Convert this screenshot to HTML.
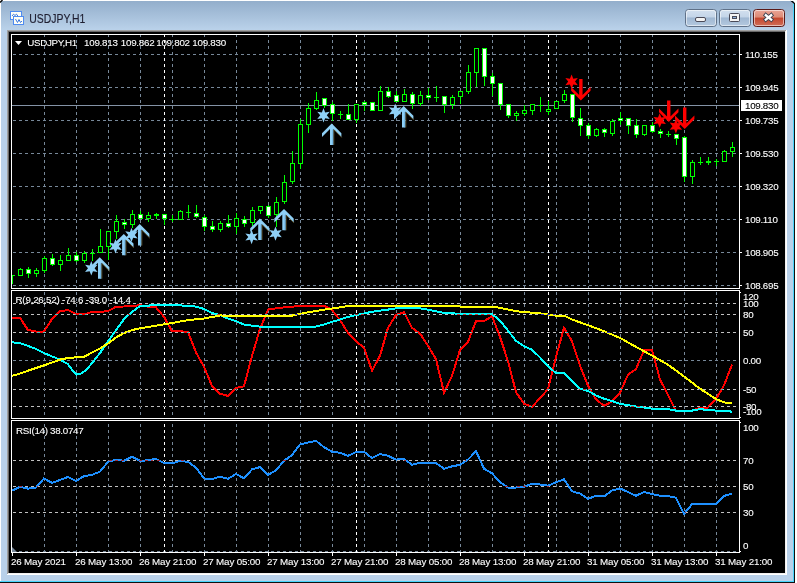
<!DOCTYPE html><html><head><meta charset="utf-8"><title>USDJPY,H1</title>
<style>html,body{margin:0;padding:0;background:#fff;overflow:hidden}svg{display:block}text{font-family:"Liberation Sans", sans-serif}</style></head><body>
<svg width="797" height="583" viewBox="0 0 797 583">
<defs>
<linearGradient id="tg" x1="0" y1="0" x2="0" y2="1"><stop offset="0" stop-color="#93aecb"/><stop offset="1" stop-color="#bad2ea"/></linearGradient>
<linearGradient id="bg1" x1="0" y1="0" x2="0" y2="1"><stop offset="0" stop-color="#d3e0ef"/><stop offset="0.46" stop-color="#c3d4e8"/><stop offset="0.48" stop-color="#9fb7d2"/><stop offset="1" stop-color="#b5cae0"/></linearGradient>
<linearGradient id="bg2" x1="0" y1="0" x2="0" y2="1"><stop offset="0" stop-color="#eba699"/><stop offset="0.45" stop-color="#dd8a75"/><stop offset="0.5" stop-color="#c4452d"/><stop offset="1" stop-color="#d0705a"/></linearGradient>
<clipPath id="cm"><rect x="12" y="35" width="727" height="253"/></clipPath>
<clipPath id="c1"><rect x="12" y="291" width="727" height="127"/></clipPath>
<clipPath id="c2"><rect x="12" y="421" width="727" height="131"/></clipPath>
</defs>
<rect x="0" y="0" width="797" height="583" fill="#fff"/>
<rect x="1" y="1" width="793" height="581" fill="#b9d1ea"/>
<rect x="1" y="1" width="792" height="29" fill="url(#tg)"/>
<rect x="793" y="3" width="1" height="579" fill="#48d4fc"/>
<rect x="794" y="3" width="1" height="580" fill="#101010"/>
<rect x="0" y="581" width="794" height="1" fill="#48d4fc"/>
<rect x="0" y="582" width="795" height="1" fill="#101010"/>
<path d="M0 2.5 L2.5 0" stroke="#000" stroke-width="1.3"/>
<path d="M791 0.5 L794.5 3.5" stroke="#000" stroke-width="1.2"/>
<rect x="791" y="0" width="4" height="1" fill="#fff"/>
<g>
<rect x="10.5" y="11.5" width="11" height="8" fill="#fffef5" stroke="#4f8cf0" stroke-width="1"/>
<path d="M12 16 L13.5 14.2 L15 15.5 L16.5 14.2 L18 16.2" stroke="#3a78e0" fill="none" stroke-width="1"/>
<rect x="13.5" y="16.5" width="10" height="8" fill="#fffef5" stroke="#4f8cf0" stroke-width="1"/>
<path d="M15.5 19 L17.5 22.5 L19 19.5 L20.5 22.5 L22 21" stroke="#3a78e0" fill="none" stroke-width="1"/>
</g>
<text x="29.3" y="22.9" font-size="12.4" fill="#1e1e30" stroke="#1e1e30" stroke-width="0.15" textLength="56" lengthAdjust="spacingAndGlyphs">USDJPY,H1</text>
<rect x="685.5" y="9.5" width="31" height="17" rx="3" ry="3" fill="url(#bg1)" stroke="#5f7188" stroke-width="1"/>
<rect x="686.5" y="10.5" width="29" height="15" rx="2" ry="2" fill="none" stroke="rgba(255,255,255,0.55)" stroke-width="1"/>
<rect x="719.5" y="9.5" width="31" height="17" rx="3" ry="3" fill="url(#bg1)" stroke="#5f7188" stroke-width="1"/>
<rect x="720.5" y="10.5" width="29" height="15" rx="2" ry="2" fill="none" stroke="rgba(255,255,255,0.55)" stroke-width="1"/>
<rect x="753.5" y="9.5" width="31" height="17" rx="3" ry="3" fill="url(#bg2)" stroke="#5a1a18" stroke-width="1"/>
<rect x="754.5" y="10.5" width="29" height="15" rx="2" ry="2" fill="none" stroke="rgba(255,255,255,0.55)" stroke-width="1"/>
<rect x="695.5" y="17.5" width="10" height="4" rx="1.5" fill="#f4f4f4" stroke="#4a4a58" stroke-width="1"/>
<rect x="729.5" y="13.5" width="10" height="8" rx="1" fill="#f4f4f4" stroke="#4a4a58" stroke-width="1"/>
<rect x="732.5" y="16.5" width="4" height="2" fill="#8fb0d8" stroke="#4a4a58" stroke-width="1"/>
<path d="M764.2 13.9 L772.8 20.9 M772.8 13.9 L764.2 20.9" stroke="#3c4050" stroke-width="4" stroke-linecap="butt"/>
<path d="M764.9 14.5 L772.1 20.3 M772.1 14.5 L764.9 20.3" stroke="#fff" stroke-width="2.3" stroke-linecap="butt"/>
<rect x="7" y="30" width="780" height="545" fill="#fff"/>
<rect x="7" y="30" width="779" height="544" fill="#a0a0a0"/>
<rect x="8" y="31" width="778" height="543" fill="#f0f0f0"/>
<rect x="8" y="31" width="777" height="542" fill="#696969"/>
<rect x="9" y="32" width="776" height="541" fill="#000"/>
<path d="M44.5 35V37M44.5 40V43M44.5 46V49M44.5 52V55M44.5 58V61M44.5 64V67M44.5 70V73M44.5 76V79M44.5 82V85M44.5 88V91M44.5 94V97M44.5 100V103M44.5 106V109M44.5 112V115M44.5 118V121M44.5 124V127M44.5 130V133M44.5 136V139M44.5 142V145M44.5 148V151M44.5 154V157M44.5 160V163M44.5 166V169M44.5 172V175M44.5 178V181M44.5 184V187M44.5 190V193M44.5 196V199M44.5 202V205M44.5 208V211M44.5 214V217M44.5 220V223M44.5 226V229M44.5 232V235M44.5 238V241M44.5 244V247M44.5 250V253M44.5 256V259M44.5 262V265M44.5 268V271M44.5 274V277M44.5 280V283M44.5 286V288M76.5 35V37M76.5 40V43M76.5 46V49M76.5 52V55M76.5 58V61M76.5 64V67M76.5 70V73M76.5 76V79M76.5 82V85M76.5 88V91M76.5 94V97M76.5 100V103M76.5 106V109M76.5 112V115M76.5 118V121M76.5 124V127M76.5 130V133M76.5 136V139M76.5 142V145M76.5 148V151M76.5 154V157M76.5 160V163M76.5 166V169M76.5 172V175M76.5 178V181M76.5 184V187M76.5 190V193M76.5 196V199M76.5 202V205M76.5 208V211M76.5 214V217M76.5 220V223M76.5 226V229M76.5 232V235M76.5 238V241M76.5 244V247M76.5 250V253M76.5 256V259M76.5 262V265M76.5 268V271M76.5 274V277M76.5 280V283M76.5 286V288M108.5 35V37M108.5 40V43M108.5 46V49M108.5 52V55M108.5 58V61M108.5 64V67M108.5 70V73M108.5 76V79M108.5 82V85M108.5 88V91M108.5 94V97M108.5 100V103M108.5 106V109M108.5 112V115M108.5 118V121M108.5 124V127M108.5 130V133M108.5 136V139M108.5 142V145M108.5 148V151M108.5 154V157M108.5 160V163M108.5 166V169M108.5 172V175M108.5 178V181M108.5 184V187M108.5 190V193M108.5 196V199M108.5 202V205M108.5 208V211M108.5 214V217M108.5 220V223M108.5 226V229M108.5 232V235M108.5 238V241M108.5 244V247M108.5 250V253M108.5 256V259M108.5 262V265M108.5 268V271M108.5 274V277M108.5 280V283M108.5 286V288M140.5 35V37M140.5 40V43M140.5 46V49M140.5 52V55M140.5 58V61M140.5 64V67M140.5 70V73M140.5 76V79M140.5 82V85M140.5 88V91M140.5 94V97M140.5 100V103M140.5 106V109M140.5 112V115M140.5 118V121M140.5 124V127M140.5 130V133M140.5 136V139M140.5 142V145M140.5 148V151M140.5 154V157M140.5 160V163M140.5 166V169M140.5 172V175M140.5 178V181M140.5 184V187M140.5 190V193M140.5 196V199M140.5 202V205M140.5 208V211M140.5 214V217M140.5 220V223M140.5 226V229M140.5 232V235M140.5 238V241M140.5 244V247M140.5 250V253M140.5 256V259M140.5 262V265M140.5 268V271M140.5 274V277M140.5 280V283M140.5 286V288M172.5 35V37M172.5 40V43M172.5 46V49M172.5 52V55M172.5 58V61M172.5 64V67M172.5 70V73M172.5 76V79M172.5 82V85M172.5 88V91M172.5 94V97M172.5 100V103M172.5 106V109M172.5 112V115M172.5 118V121M172.5 124V127M172.5 130V133M172.5 136V139M172.5 142V145M172.5 148V151M172.5 154V157M172.5 160V163M172.5 166V169M172.5 172V175M172.5 178V181M172.5 184V187M172.5 190V193M172.5 196V199M172.5 202V205M172.5 208V211M172.5 214V217M172.5 220V223M172.5 226V229M172.5 232V235M172.5 238V241M172.5 244V247M172.5 250V253M172.5 256V259M172.5 262V265M172.5 268V271M172.5 274V277M172.5 280V283M172.5 286V288M204.5 35V37M204.5 40V43M204.5 46V49M204.5 52V55M204.5 58V61M204.5 64V67M204.5 70V73M204.5 76V79M204.5 82V85M204.5 88V91M204.5 94V97M204.5 100V103M204.5 106V109M204.5 112V115M204.5 118V121M204.5 124V127M204.5 130V133M204.5 136V139M204.5 142V145M204.5 148V151M204.5 154V157M204.5 160V163M204.5 166V169M204.5 172V175M204.5 178V181M204.5 184V187M204.5 190V193M204.5 196V199M204.5 202V205M204.5 208V211M204.5 214V217M204.5 220V223M204.5 226V229M204.5 232V235M204.5 238V241M204.5 244V247M204.5 250V253M204.5 256V259M204.5 262V265M204.5 268V271M204.5 274V277M204.5 280V283M204.5 286V288M236.5 35V37M236.5 40V43M236.5 46V49M236.5 52V55M236.5 58V61M236.5 64V67M236.5 70V73M236.5 76V79M236.5 82V85M236.5 88V91M236.5 94V97M236.5 100V103M236.5 106V109M236.5 112V115M236.5 118V121M236.5 124V127M236.5 130V133M236.5 136V139M236.5 142V145M236.5 148V151M236.5 154V157M236.5 160V163M236.5 166V169M236.5 172V175M236.5 178V181M236.5 184V187M236.5 190V193M236.5 196V199M236.5 202V205M236.5 208V211M236.5 214V217M236.5 220V223M236.5 226V229M236.5 232V235M236.5 238V241M236.5 244V247M236.5 250V253M236.5 256V259M236.5 262V265M236.5 268V271M236.5 274V277M236.5 280V283M236.5 286V288M268.5 35V37M268.5 40V43M268.5 46V49M268.5 52V55M268.5 58V61M268.5 64V67M268.5 70V73M268.5 76V79M268.5 82V85M268.5 88V91M268.5 94V97M268.5 100V103M268.5 106V109M268.5 112V115M268.5 118V121M268.5 124V127M268.5 130V133M268.5 136V139M268.5 142V145M268.5 148V151M268.5 154V157M268.5 160V163M268.5 166V169M268.5 172V175M268.5 178V181M268.5 184V187M268.5 190V193M268.5 196V199M268.5 202V205M268.5 208V211M268.5 214V217M268.5 220V223M268.5 226V229M268.5 232V235M268.5 238V241M268.5 244V247M268.5 250V253M268.5 256V259M268.5 262V265M268.5 268V271M268.5 274V277M268.5 280V283M268.5 286V288M300.5 35V37M300.5 40V43M300.5 46V49M300.5 52V55M300.5 58V61M300.5 64V67M300.5 70V73M300.5 76V79M300.5 82V85M300.5 88V91M300.5 94V97M300.5 100V103M300.5 106V109M300.5 112V115M300.5 118V121M300.5 124V127M300.5 130V133M300.5 136V139M300.5 142V145M300.5 148V151M300.5 154V157M300.5 160V163M300.5 166V169M300.5 172V175M300.5 178V181M300.5 184V187M300.5 190V193M300.5 196V199M300.5 202V205M300.5 208V211M300.5 214V217M300.5 220V223M300.5 226V229M300.5 232V235M300.5 238V241M300.5 244V247M300.5 250V253M300.5 256V259M300.5 262V265M300.5 268V271M300.5 274V277M300.5 280V283M300.5 286V288M332.5 35V37M332.5 40V43M332.5 46V49M332.5 52V55M332.5 58V61M332.5 64V67M332.5 70V73M332.5 76V79M332.5 82V85M332.5 88V91M332.5 94V97M332.5 100V103M332.5 106V109M332.5 112V115M332.5 118V121M332.5 124V127M332.5 130V133M332.5 136V139M332.5 142V145M332.5 148V151M332.5 154V157M332.5 160V163M332.5 166V169M332.5 172V175M332.5 178V181M332.5 184V187M332.5 190V193M332.5 196V199M332.5 202V205M332.5 208V211M332.5 214V217M332.5 220V223M332.5 226V229M332.5 232V235M332.5 238V241M332.5 244V247M332.5 250V253M332.5 256V259M332.5 262V265M332.5 268V271M332.5 274V277M332.5 280V283M332.5 286V288M364.5 35V37M364.5 40V43M364.5 46V49M364.5 52V55M364.5 58V61M364.5 64V67M364.5 70V73M364.5 76V79M364.5 82V85M364.5 88V91M364.5 94V97M364.5 100V103M364.5 106V109M364.5 112V115M364.5 118V121M364.5 124V127M364.5 130V133M364.5 136V139M364.5 142V145M364.5 148V151M364.5 154V157M364.5 160V163M364.5 166V169M364.5 172V175M364.5 178V181M364.5 184V187M364.5 190V193M364.5 196V199M364.5 202V205M364.5 208V211M364.5 214V217M364.5 220V223M364.5 226V229M364.5 232V235M364.5 238V241M364.5 244V247M364.5 250V253M364.5 256V259M364.5 262V265M364.5 268V271M364.5 274V277M364.5 280V283M364.5 286V288M396.5 35V37M396.5 40V43M396.5 46V49M396.5 52V55M396.5 58V61M396.5 64V67M396.5 70V73M396.5 76V79M396.5 82V85M396.5 88V91M396.5 94V97M396.5 100V103M396.5 106V109M396.5 112V115M396.5 118V121M396.5 124V127M396.5 130V133M396.5 136V139M396.5 142V145M396.5 148V151M396.5 154V157M396.5 160V163M396.5 166V169M396.5 172V175M396.5 178V181M396.5 184V187M396.5 190V193M396.5 196V199M396.5 202V205M396.5 208V211M396.5 214V217M396.5 220V223M396.5 226V229M396.5 232V235M396.5 238V241M396.5 244V247M396.5 250V253M396.5 256V259M396.5 262V265M396.5 268V271M396.5 274V277M396.5 280V283M396.5 286V288M428.5 35V37M428.5 40V43M428.5 46V49M428.5 52V55M428.5 58V61M428.5 64V67M428.5 70V73M428.5 76V79M428.5 82V85M428.5 88V91M428.5 94V97M428.5 100V103M428.5 106V109M428.5 112V115M428.5 118V121M428.5 124V127M428.5 130V133M428.5 136V139M428.5 142V145M428.5 148V151M428.5 154V157M428.5 160V163M428.5 166V169M428.5 172V175M428.5 178V181M428.5 184V187M428.5 190V193M428.5 196V199M428.5 202V205M428.5 208V211M428.5 214V217M428.5 220V223M428.5 226V229M428.5 232V235M428.5 238V241M428.5 244V247M428.5 250V253M428.5 256V259M428.5 262V265M428.5 268V271M428.5 274V277M428.5 280V283M428.5 286V288M460.5 35V37M460.5 40V43M460.5 46V49M460.5 52V55M460.5 58V61M460.5 64V67M460.5 70V73M460.5 76V79M460.5 82V85M460.5 88V91M460.5 94V97M460.5 100V103M460.5 106V109M460.5 112V115M460.5 118V121M460.5 124V127M460.5 130V133M460.5 136V139M460.5 142V145M460.5 148V151M460.5 154V157M460.5 160V163M460.5 166V169M460.5 172V175M460.5 178V181M460.5 184V187M460.5 190V193M460.5 196V199M460.5 202V205M460.5 208V211M460.5 214V217M460.5 220V223M460.5 226V229M460.5 232V235M460.5 238V241M460.5 244V247M460.5 250V253M460.5 256V259M460.5 262V265M460.5 268V271M460.5 274V277M460.5 280V283M460.5 286V288M492.5 35V37M492.5 40V43M492.5 46V49M492.5 52V55M492.5 58V61M492.5 64V67M492.5 70V73M492.5 76V79M492.5 82V85M492.5 88V91M492.5 94V97M492.5 100V103M492.5 106V109M492.5 112V115M492.5 118V121M492.5 124V127M492.5 130V133M492.5 136V139M492.5 142V145M492.5 148V151M492.5 154V157M492.5 160V163M492.5 166V169M492.5 172V175M492.5 178V181M492.5 184V187M492.5 190V193M492.5 196V199M492.5 202V205M492.5 208V211M492.5 214V217M492.5 220V223M492.5 226V229M492.5 232V235M492.5 238V241M492.5 244V247M492.5 250V253M492.5 256V259M492.5 262V265M492.5 268V271M492.5 274V277M492.5 280V283M492.5 286V288M524.5 35V37M524.5 40V43M524.5 46V49M524.5 52V55M524.5 58V61M524.5 64V67M524.5 70V73M524.5 76V79M524.5 82V85M524.5 88V91M524.5 94V97M524.5 100V103M524.5 106V109M524.5 112V115M524.5 118V121M524.5 124V127M524.5 130V133M524.5 136V139M524.5 142V145M524.5 148V151M524.5 154V157M524.5 160V163M524.5 166V169M524.5 172V175M524.5 178V181M524.5 184V187M524.5 190V193M524.5 196V199M524.5 202V205M524.5 208V211M524.5 214V217M524.5 220V223M524.5 226V229M524.5 232V235M524.5 238V241M524.5 244V247M524.5 250V253M524.5 256V259M524.5 262V265M524.5 268V271M524.5 274V277M524.5 280V283M524.5 286V288M556.5 35V37M556.5 40V43M556.5 46V49M556.5 52V55M556.5 58V61M556.5 64V67M556.5 70V73M556.5 76V79M556.5 82V85M556.5 88V91M556.5 94V97M556.5 100V103M556.5 106V109M556.5 112V115M556.5 118V121M556.5 124V127M556.5 130V133M556.5 136V139M556.5 142V145M556.5 148V151M556.5 154V157M556.5 160V163M556.5 166V169M556.5 172V175M556.5 178V181M556.5 184V187M556.5 190V193M556.5 196V199M556.5 202V205M556.5 208V211M556.5 214V217M556.5 220V223M556.5 226V229M556.5 232V235M556.5 238V241M556.5 244V247M556.5 250V253M556.5 256V259M556.5 262V265M556.5 268V271M556.5 274V277M556.5 280V283M556.5 286V288M588.5 35V37M588.5 40V43M588.5 46V49M588.5 52V55M588.5 58V61M588.5 64V67M588.5 70V73M588.5 76V79M588.5 82V85M588.5 88V91M588.5 94V97M588.5 100V103M588.5 106V109M588.5 112V115M588.5 118V121M588.5 124V127M588.5 130V133M588.5 136V139M588.5 142V145M588.5 148V151M588.5 154V157M588.5 160V163M588.5 166V169M588.5 172V175M588.5 178V181M588.5 184V187M588.5 190V193M588.5 196V199M588.5 202V205M588.5 208V211M588.5 214V217M588.5 220V223M588.5 226V229M588.5 232V235M588.5 238V241M588.5 244V247M588.5 250V253M588.5 256V259M588.5 262V265M588.5 268V271M588.5 274V277M588.5 280V283M588.5 286V288M620.5 35V37M620.5 40V43M620.5 46V49M620.5 52V55M620.5 58V61M620.5 64V67M620.5 70V73M620.5 76V79M620.5 82V85M620.5 88V91M620.5 94V97M620.5 100V103M620.5 106V109M620.5 112V115M620.5 118V121M620.5 124V127M620.5 130V133M620.5 136V139M620.5 142V145M620.5 148V151M620.5 154V157M620.5 160V163M620.5 166V169M620.5 172V175M620.5 178V181M620.5 184V187M620.5 190V193M620.5 196V199M620.5 202V205M620.5 208V211M620.5 214V217M620.5 220V223M620.5 226V229M620.5 232V235M620.5 238V241M620.5 244V247M620.5 250V253M620.5 256V259M620.5 262V265M620.5 268V271M620.5 274V277M620.5 280V283M620.5 286V288M652.5 35V37M652.5 40V43M652.5 46V49M652.5 52V55M652.5 58V61M652.5 64V67M652.5 70V73M652.5 76V79M652.5 82V85M652.5 88V91M652.5 94V97M652.5 100V103M652.5 106V109M652.5 112V115M652.5 118V121M652.5 124V127M652.5 130V133M652.5 136V139M652.5 142V145M652.5 148V151M652.5 154V157M652.5 160V163M652.5 166V169M652.5 172V175M652.5 178V181M652.5 184V187M652.5 190V193M652.5 196V199M652.5 202V205M652.5 208V211M652.5 214V217M652.5 220V223M652.5 226V229M652.5 232V235M652.5 238V241M652.5 244V247M652.5 250V253M652.5 256V259M652.5 262V265M652.5 268V271M652.5 274V277M652.5 280V283M652.5 286V288M684.5 35V37M684.5 40V43M684.5 46V49M684.5 52V55M684.5 58V61M684.5 64V67M684.5 70V73M684.5 76V79M684.5 82V85M684.5 88V91M684.5 94V97M684.5 100V103M684.5 106V109M684.5 112V115M684.5 118V121M684.5 124V127M684.5 130V133M684.5 136V139M684.5 142V145M684.5 148V151M684.5 154V157M684.5 160V163M684.5 166V169M684.5 172V175M684.5 178V181M684.5 184V187M684.5 190V193M684.5 196V199M684.5 202V205M684.5 208V211M684.5 214V217M684.5 220V223M684.5 226V229M684.5 232V235M684.5 238V241M684.5 244V247M684.5 250V253M684.5 256V259M684.5 262V265M684.5 268V271M684.5 274V277M684.5 280V283M684.5 286V288M716.5 35V37M716.5 40V43M716.5 46V49M716.5 52V55M716.5 58V61M716.5 64V67M716.5 70V73M716.5 76V79M716.5 82V85M716.5 88V91M716.5 94V97M716.5 100V103M716.5 106V109M716.5 112V115M716.5 118V121M716.5 124V127M716.5 130V133M716.5 136V139M716.5 142V145M716.5 148V151M716.5 154V157M716.5 160V163M716.5 166V169M716.5 172V175M716.5 178V181M716.5 184V187M716.5 190V193M716.5 196V199M716.5 202V205M716.5 208V211M716.5 214V217M716.5 220V223M716.5 226V229M716.5 232V235M716.5 238V241M716.5 244V247M716.5 250V253M716.5 256V259M716.5 262V265M716.5 268V271M716.5 274V277M716.5 280V283M716.5 286V288M44.5 292V295M44.5 298V301M44.5 304V307M44.5 310V313M44.5 316V319M44.5 322V325M44.5 328V331M44.5 334V337M44.5 340V343M44.5 346V349M44.5 352V355M44.5 358V361M44.5 364V367M44.5 370V373M44.5 376V379M44.5 382V385M44.5 388V391M44.5 394V397M44.5 400V403M44.5 406V409M44.5 412V415M76.5 292V295M76.5 298V301M76.5 304V307M76.5 310V313M76.5 316V319M76.5 322V325M76.5 328V331M76.5 334V337M76.5 340V343M76.5 346V349M76.5 352V355M76.5 358V361M76.5 364V367M76.5 370V373M76.5 376V379M76.5 382V385M76.5 388V391M76.5 394V397M76.5 400V403M76.5 406V409M76.5 412V415M108.5 292V295M108.5 298V301M108.5 304V307M108.5 310V313M108.5 316V319M108.5 322V325M108.5 328V331M108.5 334V337M108.5 340V343M108.5 346V349M108.5 352V355M108.5 358V361M108.5 364V367M108.5 370V373M108.5 376V379M108.5 382V385M108.5 388V391M108.5 394V397M108.5 400V403M108.5 406V409M108.5 412V415M140.5 292V295M140.5 298V301M140.5 304V307M140.5 310V313M140.5 316V319M140.5 322V325M140.5 328V331M140.5 334V337M140.5 340V343M140.5 346V349M140.5 352V355M140.5 358V361M140.5 364V367M140.5 370V373M140.5 376V379M140.5 382V385M140.5 388V391M140.5 394V397M140.5 400V403M140.5 406V409M140.5 412V415M172.5 292V295M172.5 298V301M172.5 304V307M172.5 310V313M172.5 316V319M172.5 322V325M172.5 328V331M172.5 334V337M172.5 340V343M172.5 346V349M172.5 352V355M172.5 358V361M172.5 364V367M172.5 370V373M172.5 376V379M172.5 382V385M172.5 388V391M172.5 394V397M172.5 400V403M172.5 406V409M172.5 412V415M204.5 292V295M204.5 298V301M204.5 304V307M204.5 310V313M204.5 316V319M204.5 322V325M204.5 328V331M204.5 334V337M204.5 340V343M204.5 346V349M204.5 352V355M204.5 358V361M204.5 364V367M204.5 370V373M204.5 376V379M204.5 382V385M204.5 388V391M204.5 394V397M204.5 400V403M204.5 406V409M204.5 412V415M236.5 292V295M236.5 298V301M236.5 304V307M236.5 310V313M236.5 316V319M236.5 322V325M236.5 328V331M236.5 334V337M236.5 340V343M236.5 346V349M236.5 352V355M236.5 358V361M236.5 364V367M236.5 370V373M236.5 376V379M236.5 382V385M236.5 388V391M236.5 394V397M236.5 400V403M236.5 406V409M236.5 412V415M268.5 292V295M268.5 298V301M268.5 304V307M268.5 310V313M268.5 316V319M268.5 322V325M268.5 328V331M268.5 334V337M268.5 340V343M268.5 346V349M268.5 352V355M268.5 358V361M268.5 364V367M268.5 370V373M268.5 376V379M268.5 382V385M268.5 388V391M268.5 394V397M268.5 400V403M268.5 406V409M268.5 412V415M300.5 292V295M300.5 298V301M300.5 304V307M300.5 310V313M300.5 316V319M300.5 322V325M300.5 328V331M300.5 334V337M300.5 340V343M300.5 346V349M300.5 352V355M300.5 358V361M300.5 364V367M300.5 370V373M300.5 376V379M300.5 382V385M300.5 388V391M300.5 394V397M300.5 400V403M300.5 406V409M300.5 412V415M332.5 292V295M332.5 298V301M332.5 304V307M332.5 310V313M332.5 316V319M332.5 322V325M332.5 328V331M332.5 334V337M332.5 340V343M332.5 346V349M332.5 352V355M332.5 358V361M332.5 364V367M332.5 370V373M332.5 376V379M332.5 382V385M332.5 388V391M332.5 394V397M332.5 400V403M332.5 406V409M332.5 412V415M364.5 292V295M364.5 298V301M364.5 304V307M364.5 310V313M364.5 316V319M364.5 322V325M364.5 328V331M364.5 334V337M364.5 340V343M364.5 346V349M364.5 352V355M364.5 358V361M364.5 364V367M364.5 370V373M364.5 376V379M364.5 382V385M364.5 388V391M364.5 394V397M364.5 400V403M364.5 406V409M364.5 412V415M396.5 292V295M396.5 298V301M396.5 304V307M396.5 310V313M396.5 316V319M396.5 322V325M396.5 328V331M396.5 334V337M396.5 340V343M396.5 346V349M396.5 352V355M396.5 358V361M396.5 364V367M396.5 370V373M396.5 376V379M396.5 382V385M396.5 388V391M396.5 394V397M396.5 400V403M396.5 406V409M396.5 412V415M428.5 292V295M428.5 298V301M428.5 304V307M428.5 310V313M428.5 316V319M428.5 322V325M428.5 328V331M428.5 334V337M428.5 340V343M428.5 346V349M428.5 352V355M428.5 358V361M428.5 364V367M428.5 370V373M428.5 376V379M428.5 382V385M428.5 388V391M428.5 394V397M428.5 400V403M428.5 406V409M428.5 412V415M460.5 292V295M460.5 298V301M460.5 304V307M460.5 310V313M460.5 316V319M460.5 322V325M460.5 328V331M460.5 334V337M460.5 340V343M460.5 346V349M460.5 352V355M460.5 358V361M460.5 364V367M460.5 370V373M460.5 376V379M460.5 382V385M460.5 388V391M460.5 394V397M460.5 400V403M460.5 406V409M460.5 412V415M492.5 292V295M492.5 298V301M492.5 304V307M492.5 310V313M492.5 316V319M492.5 322V325M492.5 328V331M492.5 334V337M492.5 340V343M492.5 346V349M492.5 352V355M492.5 358V361M492.5 364V367M492.5 370V373M492.5 376V379M492.5 382V385M492.5 388V391M492.5 394V397M492.5 400V403M492.5 406V409M492.5 412V415M524.5 292V295M524.5 298V301M524.5 304V307M524.5 310V313M524.5 316V319M524.5 322V325M524.5 328V331M524.5 334V337M524.5 340V343M524.5 346V349M524.5 352V355M524.5 358V361M524.5 364V367M524.5 370V373M524.5 376V379M524.5 382V385M524.5 388V391M524.5 394V397M524.5 400V403M524.5 406V409M524.5 412V415M556.5 292V295M556.5 298V301M556.5 304V307M556.5 310V313M556.5 316V319M556.5 322V325M556.5 328V331M556.5 334V337M556.5 340V343M556.5 346V349M556.5 352V355M556.5 358V361M556.5 364V367M556.5 370V373M556.5 376V379M556.5 382V385M556.5 388V391M556.5 394V397M556.5 400V403M556.5 406V409M556.5 412V415M588.5 292V295M588.5 298V301M588.5 304V307M588.5 310V313M588.5 316V319M588.5 322V325M588.5 328V331M588.5 334V337M588.5 340V343M588.5 346V349M588.5 352V355M588.5 358V361M588.5 364V367M588.5 370V373M588.5 376V379M588.5 382V385M588.5 388V391M588.5 394V397M588.5 400V403M588.5 406V409M588.5 412V415M620.5 292V295M620.5 298V301M620.5 304V307M620.5 310V313M620.5 316V319M620.5 322V325M620.5 328V331M620.5 334V337M620.5 340V343M620.5 346V349M620.5 352V355M620.5 358V361M620.5 364V367M620.5 370V373M620.5 376V379M620.5 382V385M620.5 388V391M620.5 394V397M620.5 400V403M620.5 406V409M620.5 412V415M652.5 292V295M652.5 298V301M652.5 304V307M652.5 310V313M652.5 316V319M652.5 322V325M652.5 328V331M652.5 334V337M652.5 340V343M652.5 346V349M652.5 352V355M652.5 358V361M652.5 364V367M652.5 370V373M652.5 376V379M652.5 382V385M652.5 388V391M652.5 394V397M652.5 400V403M652.5 406V409M652.5 412V415M684.5 292V295M684.5 298V301M684.5 304V307M684.5 310V313M684.5 316V319M684.5 322V325M684.5 328V331M684.5 334V337M684.5 340V343M684.5 346V349M684.5 352V355M684.5 358V361M684.5 364V367M684.5 370V373M684.5 376V379M684.5 382V385M684.5 388V391M684.5 394V397M684.5 400V403M684.5 406V409M684.5 412V415M716.5 292V295M716.5 298V301M716.5 304V307M716.5 310V313M716.5 316V319M716.5 322V325M716.5 328V331M716.5 334V337M716.5 340V343M716.5 346V349M716.5 352V355M716.5 358V361M716.5 364V367M716.5 370V373M716.5 376V379M716.5 382V385M716.5 388V391M716.5 394V397M716.5 400V403M716.5 406V409M716.5 412V415M44.5 424V427M44.5 430V433M44.5 436V439M44.5 442V445M44.5 448V451M44.5 454V457M44.5 460V463M44.5 466V469M44.5 472V475M44.5 478V481M44.5 484V487M44.5 490V493M44.5 496V499M44.5 502V505M44.5 508V511M44.5 514V517M44.5 520V523M44.5 526V529M44.5 532V535M44.5 538V541M44.5 544V547M44.5 550V552M76.5 424V427M76.5 430V433M76.5 436V439M76.5 442V445M76.5 448V451M76.5 454V457M76.5 460V463M76.5 466V469M76.5 472V475M76.5 478V481M76.5 484V487M76.5 490V493M76.5 496V499M76.5 502V505M76.5 508V511M76.5 514V517M76.5 520V523M76.5 526V529M76.5 532V535M76.5 538V541M76.5 544V547M76.5 550V552M108.5 424V427M108.5 430V433M108.5 436V439M108.5 442V445M108.5 448V451M108.5 454V457M108.5 460V463M108.5 466V469M108.5 472V475M108.5 478V481M108.5 484V487M108.5 490V493M108.5 496V499M108.5 502V505M108.5 508V511M108.5 514V517M108.5 520V523M108.5 526V529M108.5 532V535M108.5 538V541M108.5 544V547M108.5 550V552M140.5 424V427M140.5 430V433M140.5 436V439M140.5 442V445M140.5 448V451M140.5 454V457M140.5 460V463M140.5 466V469M140.5 472V475M140.5 478V481M140.5 484V487M140.5 490V493M140.5 496V499M140.5 502V505M140.5 508V511M140.5 514V517M140.5 520V523M140.5 526V529M140.5 532V535M140.5 538V541M140.5 544V547M140.5 550V552M172.5 424V427M172.5 430V433M172.5 436V439M172.5 442V445M172.5 448V451M172.5 454V457M172.5 460V463M172.5 466V469M172.5 472V475M172.5 478V481M172.5 484V487M172.5 490V493M172.5 496V499M172.5 502V505M172.5 508V511M172.5 514V517M172.5 520V523M172.5 526V529M172.5 532V535M172.5 538V541M172.5 544V547M172.5 550V552M204.5 424V427M204.5 430V433M204.5 436V439M204.5 442V445M204.5 448V451M204.5 454V457M204.5 460V463M204.5 466V469M204.5 472V475M204.5 478V481M204.5 484V487M204.5 490V493M204.5 496V499M204.5 502V505M204.5 508V511M204.5 514V517M204.5 520V523M204.5 526V529M204.5 532V535M204.5 538V541M204.5 544V547M204.5 550V552M236.5 424V427M236.5 430V433M236.5 436V439M236.5 442V445M236.5 448V451M236.5 454V457M236.5 460V463M236.5 466V469M236.5 472V475M236.5 478V481M236.5 484V487M236.5 490V493M236.5 496V499M236.5 502V505M236.5 508V511M236.5 514V517M236.5 520V523M236.5 526V529M236.5 532V535M236.5 538V541M236.5 544V547M236.5 550V552M268.5 424V427M268.5 430V433M268.5 436V439M268.5 442V445M268.5 448V451M268.5 454V457M268.5 460V463M268.5 466V469M268.5 472V475M268.5 478V481M268.5 484V487M268.5 490V493M268.5 496V499M268.5 502V505M268.5 508V511M268.5 514V517M268.5 520V523M268.5 526V529M268.5 532V535M268.5 538V541M268.5 544V547M268.5 550V552M300.5 424V427M300.5 430V433M300.5 436V439M300.5 442V445M300.5 448V451M300.5 454V457M300.5 460V463M300.5 466V469M300.5 472V475M300.5 478V481M300.5 484V487M300.5 490V493M300.5 496V499M300.5 502V505M300.5 508V511M300.5 514V517M300.5 520V523M300.5 526V529M300.5 532V535M300.5 538V541M300.5 544V547M300.5 550V552M332.5 424V427M332.5 430V433M332.5 436V439M332.5 442V445M332.5 448V451M332.5 454V457M332.5 460V463M332.5 466V469M332.5 472V475M332.5 478V481M332.5 484V487M332.5 490V493M332.5 496V499M332.5 502V505M332.5 508V511M332.5 514V517M332.5 520V523M332.5 526V529M332.5 532V535M332.5 538V541M332.5 544V547M332.5 550V552M364.5 424V427M364.5 430V433M364.5 436V439M364.5 442V445M364.5 448V451M364.5 454V457M364.5 460V463M364.5 466V469M364.5 472V475M364.5 478V481M364.5 484V487M364.5 490V493M364.5 496V499M364.5 502V505M364.5 508V511M364.5 514V517M364.5 520V523M364.5 526V529M364.5 532V535M364.5 538V541M364.5 544V547M364.5 550V552M396.5 424V427M396.5 430V433M396.5 436V439M396.5 442V445M396.5 448V451M396.5 454V457M396.5 460V463M396.5 466V469M396.5 472V475M396.5 478V481M396.5 484V487M396.5 490V493M396.5 496V499M396.5 502V505M396.5 508V511M396.5 514V517M396.5 520V523M396.5 526V529M396.5 532V535M396.5 538V541M396.5 544V547M396.5 550V552M428.5 424V427M428.5 430V433M428.5 436V439M428.5 442V445M428.5 448V451M428.5 454V457M428.5 460V463M428.5 466V469M428.5 472V475M428.5 478V481M428.5 484V487M428.5 490V493M428.5 496V499M428.5 502V505M428.5 508V511M428.5 514V517M428.5 520V523M428.5 526V529M428.5 532V535M428.5 538V541M428.5 544V547M428.5 550V552M460.5 424V427M460.5 430V433M460.5 436V439M460.5 442V445M460.5 448V451M460.5 454V457M460.5 460V463M460.5 466V469M460.5 472V475M460.5 478V481M460.5 484V487M460.5 490V493M460.5 496V499M460.5 502V505M460.5 508V511M460.5 514V517M460.5 520V523M460.5 526V529M460.5 532V535M460.5 538V541M460.5 544V547M460.5 550V552M492.5 424V427M492.5 430V433M492.5 436V439M492.5 442V445M492.5 448V451M492.5 454V457M492.5 460V463M492.5 466V469M492.5 472V475M492.5 478V481M492.5 484V487M492.5 490V493M492.5 496V499M492.5 502V505M492.5 508V511M492.5 514V517M492.5 520V523M492.5 526V529M492.5 532V535M492.5 538V541M492.5 544V547M492.5 550V552M524.5 424V427M524.5 430V433M524.5 436V439M524.5 442V445M524.5 448V451M524.5 454V457M524.5 460V463M524.5 466V469M524.5 472V475M524.5 478V481M524.5 484V487M524.5 490V493M524.5 496V499M524.5 502V505M524.5 508V511M524.5 514V517M524.5 520V523M524.5 526V529M524.5 532V535M524.5 538V541M524.5 544V547M524.5 550V552M556.5 424V427M556.5 430V433M556.5 436V439M556.5 442V445M556.5 448V451M556.5 454V457M556.5 460V463M556.5 466V469M556.5 472V475M556.5 478V481M556.5 484V487M556.5 490V493M556.5 496V499M556.5 502V505M556.5 508V511M556.5 514V517M556.5 520V523M556.5 526V529M556.5 532V535M556.5 538V541M556.5 544V547M556.5 550V552M588.5 424V427M588.5 430V433M588.5 436V439M588.5 442V445M588.5 448V451M588.5 454V457M588.5 460V463M588.5 466V469M588.5 472V475M588.5 478V481M588.5 484V487M588.5 490V493M588.5 496V499M588.5 502V505M588.5 508V511M588.5 514V517M588.5 520V523M588.5 526V529M588.5 532V535M588.5 538V541M588.5 544V547M588.5 550V552M620.5 424V427M620.5 430V433M620.5 436V439M620.5 442V445M620.5 448V451M620.5 454V457M620.5 460V463M620.5 466V469M620.5 472V475M620.5 478V481M620.5 484V487M620.5 490V493M620.5 496V499M620.5 502V505M620.5 508V511M620.5 514V517M620.5 520V523M620.5 526V529M620.5 532V535M620.5 538V541M620.5 544V547M620.5 550V552M652.5 424V427M652.5 430V433M652.5 436V439M652.5 442V445M652.5 448V451M652.5 454V457M652.5 460V463M652.5 466V469M652.5 472V475M652.5 478V481M652.5 484V487M652.5 490V493M652.5 496V499M652.5 502V505M652.5 508V511M652.5 514V517M652.5 520V523M652.5 526V529M652.5 532V535M652.5 538V541M652.5 544V547M652.5 550V552M684.5 424V427M684.5 430V433M684.5 436V439M684.5 442V445M684.5 448V451M684.5 454V457M684.5 460V463M684.5 466V469M684.5 472V475M684.5 478V481M684.5 484V487M684.5 490V493M684.5 496V499M684.5 502V505M684.5 508V511M684.5 514V517M684.5 520V523M684.5 526V529M684.5 532V535M684.5 538V541M684.5 544V547M684.5 550V552M716.5 424V427M716.5 430V433M716.5 436V439M716.5 442V445M716.5 448V451M716.5 454V457M716.5 460V463M716.5 466V469M716.5 472V475M716.5 478V481M716.5 484V487M716.5 490V493M716.5 496V499M716.5 502V505M716.5 508V511M716.5 514V517M716.5 520V523M716.5 526V529M716.5 532V535M716.5 538V541M716.5 544V547M716.5 550V552M13 54.5H16M19 54.5H22M25 54.5H28M31 54.5H34M37 54.5H40M43 54.5H46M49 54.5H52M55 54.5H58M61 54.5H64M67 54.5H70M73 54.5H76M79 54.5H82M85 54.5H88M91 54.5H94M97 54.5H100M103 54.5H106M109 54.5H112M115 54.5H118M121 54.5H124M127 54.5H130M133 54.5H136M139 54.5H142M145 54.5H148M151 54.5H154M157 54.5H160M163 54.5H166M169 54.5H172M175 54.5H178M181 54.5H184M187 54.5H190M193 54.5H196M199 54.5H202M205 54.5H208M211 54.5H214M217 54.5H220M223 54.5H226M229 54.5H232M235 54.5H238M241 54.5H244M247 54.5H250M253 54.5H256M259 54.5H262M265 54.5H268M271 54.5H274M277 54.5H280M283 54.5H286M289 54.5H292M295 54.5H298M301 54.5H304M307 54.5H310M313 54.5H316M319 54.5H322M325 54.5H328M331 54.5H334M337 54.5H340M343 54.5H346M349 54.5H352M355 54.5H358M361 54.5H364M367 54.5H370M373 54.5H376M379 54.5H382M385 54.5H388M391 54.5H394M397 54.5H400M403 54.5H406M409 54.5H412M415 54.5H418M421 54.5H424M427 54.5H430M433 54.5H436M439 54.5H442M445 54.5H448M451 54.5H454M457 54.5H460M463 54.5H466M469 54.5H472M475 54.5H478M481 54.5H484M487 54.5H490M493 54.5H496M499 54.5H502M505 54.5H508M511 54.5H514M517 54.5H520M523 54.5H526M529 54.5H532M535 54.5H538M541 54.5H544M547 54.5H550M553 54.5H556M559 54.5H562M565 54.5H568M571 54.5H574M577 54.5H580M583 54.5H586M589 54.5H592M595 54.5H598M601 54.5H604M607 54.5H610M613 54.5H616M619 54.5H622M625 54.5H628M631 54.5H634M637 54.5H640M643 54.5H646M649 54.5H652M655 54.5H658M661 54.5H664M667 54.5H670M673 54.5H676M679 54.5H682M685 54.5H688M691 54.5H694M697 54.5H700M703 54.5H706M709 54.5H712M715 54.5H718M721 54.5H724M727 54.5H730M733 54.5H736M13 87.5H16M19 87.5H22M25 87.5H28M31 87.5H34M37 87.5H40M43 87.5H46M49 87.5H52M55 87.5H58M61 87.5H64M67 87.5H70M73 87.5H76M79 87.5H82M85 87.5H88M91 87.5H94M97 87.5H100M103 87.5H106M109 87.5H112M115 87.5H118M121 87.5H124M127 87.5H130M133 87.5H136M139 87.5H142M145 87.5H148M151 87.5H154M157 87.5H160M163 87.5H166M169 87.5H172M175 87.5H178M181 87.5H184M187 87.5H190M193 87.5H196M199 87.5H202M205 87.5H208M211 87.5H214M217 87.5H220M223 87.5H226M229 87.5H232M235 87.5H238M241 87.5H244M247 87.5H250M253 87.5H256M259 87.5H262M265 87.5H268M271 87.5H274M277 87.5H280M283 87.5H286M289 87.5H292M295 87.5H298M301 87.5H304M307 87.5H310M313 87.5H316M319 87.5H322M325 87.5H328M331 87.5H334M337 87.5H340M343 87.5H346M349 87.5H352M355 87.5H358M361 87.5H364M367 87.5H370M373 87.5H376M379 87.5H382M385 87.5H388M391 87.5H394M397 87.5H400M403 87.5H406M409 87.5H412M415 87.5H418M421 87.5H424M427 87.5H430M433 87.5H436M439 87.5H442M445 87.5H448M451 87.5H454M457 87.5H460M463 87.5H466M469 87.5H472M475 87.5H478M481 87.5H484M487 87.5H490M493 87.5H496M499 87.5H502M505 87.5H508M511 87.5H514M517 87.5H520M523 87.5H526M529 87.5H532M535 87.5H538M541 87.5H544M547 87.5H550M553 87.5H556M559 87.5H562M565 87.5H568M571 87.5H574M577 87.5H580M583 87.5H586M589 87.5H592M595 87.5H598M601 87.5H604M607 87.5H610M613 87.5H616M619 87.5H622M625 87.5H628M631 87.5H634M637 87.5H640M643 87.5H646M649 87.5H652M655 87.5H658M661 87.5H664M667 87.5H670M673 87.5H676M679 87.5H682M685 87.5H688M691 87.5H694M697 87.5H700M703 87.5H706M709 87.5H712M715 87.5H718M721 87.5H724M727 87.5H730M733 87.5H736M13 120.5H16M19 120.5H22M25 120.5H28M31 120.5H34M37 120.5H40M43 120.5H46M49 120.5H52M55 120.5H58M61 120.5H64M67 120.5H70M73 120.5H76M79 120.5H82M85 120.5H88M91 120.5H94M97 120.5H100M103 120.5H106M109 120.5H112M115 120.5H118M121 120.5H124M127 120.5H130M133 120.5H136M139 120.5H142M145 120.5H148M151 120.5H154M157 120.5H160M163 120.5H166M169 120.5H172M175 120.5H178M181 120.5H184M187 120.5H190M193 120.5H196M199 120.5H202M205 120.5H208M211 120.5H214M217 120.5H220M223 120.5H226M229 120.5H232M235 120.5H238M241 120.5H244M247 120.5H250M253 120.5H256M259 120.5H262M265 120.5H268M271 120.5H274M277 120.5H280M283 120.5H286M289 120.5H292M295 120.5H298M301 120.5H304M307 120.5H310M313 120.5H316M319 120.5H322M325 120.5H328M331 120.5H334M337 120.5H340M343 120.5H346M349 120.5H352M355 120.5H358M361 120.5H364M367 120.5H370M373 120.5H376M379 120.5H382M385 120.5H388M391 120.5H394M397 120.5H400M403 120.5H406M409 120.5H412M415 120.5H418M421 120.5H424M427 120.5H430M433 120.5H436M439 120.5H442M445 120.5H448M451 120.5H454M457 120.5H460M463 120.5H466M469 120.5H472M475 120.5H478M481 120.5H484M487 120.5H490M493 120.5H496M499 120.5H502M505 120.5H508M511 120.5H514M517 120.5H520M523 120.5H526M529 120.5H532M535 120.5H538M541 120.5H544M547 120.5H550M553 120.5H556M559 120.5H562M565 120.5H568M571 120.5H574M577 120.5H580M583 120.5H586M589 120.5H592M595 120.5H598M601 120.5H604M607 120.5H610M613 120.5H616M619 120.5H622M625 120.5H628M631 120.5H634M637 120.5H640M643 120.5H646M649 120.5H652M655 120.5H658M661 120.5H664M667 120.5H670M673 120.5H676M679 120.5H682M685 120.5H688M691 120.5H694M697 120.5H700M703 120.5H706M709 120.5H712M715 120.5H718M721 120.5H724M727 120.5H730M733 120.5H736M13 153.5H16M19 153.5H22M25 153.5H28M31 153.5H34M37 153.5H40M43 153.5H46M49 153.5H52M55 153.5H58M61 153.5H64M67 153.5H70M73 153.5H76M79 153.5H82M85 153.5H88M91 153.5H94M97 153.5H100M103 153.5H106M109 153.5H112M115 153.5H118M121 153.5H124M127 153.5H130M133 153.5H136M139 153.5H142M145 153.5H148M151 153.5H154M157 153.5H160M163 153.5H166M169 153.5H172M175 153.5H178M181 153.5H184M187 153.5H190M193 153.5H196M199 153.5H202M205 153.5H208M211 153.5H214M217 153.5H220M223 153.5H226M229 153.5H232M235 153.5H238M241 153.5H244M247 153.5H250M253 153.5H256M259 153.5H262M265 153.5H268M271 153.5H274M277 153.5H280M283 153.5H286M289 153.5H292M295 153.5H298M301 153.5H304M307 153.5H310M313 153.5H316M319 153.5H322M325 153.5H328M331 153.5H334M337 153.5H340M343 153.5H346M349 153.5H352M355 153.5H358M361 153.5H364M367 153.5H370M373 153.5H376M379 153.5H382M385 153.5H388M391 153.5H394M397 153.5H400M403 153.5H406M409 153.5H412M415 153.5H418M421 153.5H424M427 153.5H430M433 153.5H436M439 153.5H442M445 153.5H448M451 153.5H454M457 153.5H460M463 153.5H466M469 153.5H472M475 153.5H478M481 153.5H484M487 153.5H490M493 153.5H496M499 153.5H502M505 153.5H508M511 153.5H514M517 153.5H520M523 153.5H526M529 153.5H532M535 153.5H538M541 153.5H544M547 153.5H550M553 153.5H556M559 153.5H562M565 153.5H568M571 153.5H574M577 153.5H580M583 153.5H586M589 153.5H592M595 153.5H598M601 153.5H604M607 153.5H610M613 153.5H616M619 153.5H622M625 153.5H628M631 153.5H634M637 153.5H640M643 153.5H646M649 153.5H652M655 153.5H658M661 153.5H664M667 153.5H670M673 153.5H676M679 153.5H682M685 153.5H688M691 153.5H694M697 153.5H700M703 153.5H706M709 153.5H712M715 153.5H718M721 153.5H724M727 153.5H730M733 153.5H736M13 186.5H16M19 186.5H22M25 186.5H28M31 186.5H34M37 186.5H40M43 186.5H46M49 186.5H52M55 186.5H58M61 186.5H64M67 186.5H70M73 186.5H76M79 186.5H82M85 186.5H88M91 186.5H94M97 186.5H100M103 186.5H106M109 186.5H112M115 186.5H118M121 186.5H124M127 186.5H130M133 186.5H136M139 186.5H142M145 186.5H148M151 186.5H154M157 186.5H160M163 186.5H166M169 186.5H172M175 186.5H178M181 186.5H184M187 186.5H190M193 186.5H196M199 186.5H202M205 186.5H208M211 186.5H214M217 186.5H220M223 186.5H226M229 186.5H232M235 186.5H238M241 186.5H244M247 186.5H250M253 186.5H256M259 186.5H262M265 186.5H268M271 186.5H274M277 186.5H280M283 186.5H286M289 186.5H292M295 186.5H298M301 186.5H304M307 186.5H310M313 186.5H316M319 186.5H322M325 186.5H328M331 186.5H334M337 186.5H340M343 186.5H346M349 186.5H352M355 186.5H358M361 186.5H364M367 186.5H370M373 186.5H376M379 186.5H382M385 186.5H388M391 186.5H394M397 186.5H400M403 186.5H406M409 186.5H412M415 186.5H418M421 186.5H424M427 186.5H430M433 186.5H436M439 186.5H442M445 186.5H448M451 186.5H454M457 186.5H460M463 186.5H466M469 186.5H472M475 186.5H478M481 186.5H484M487 186.5H490M493 186.5H496M499 186.5H502M505 186.5H508M511 186.5H514M517 186.5H520M523 186.5H526M529 186.5H532M535 186.5H538M541 186.5H544M547 186.5H550M553 186.5H556M559 186.5H562M565 186.5H568M571 186.5H574M577 186.5H580M583 186.5H586M589 186.5H592M595 186.5H598M601 186.5H604M607 186.5H610M613 186.5H616M619 186.5H622M625 186.5H628M631 186.5H634M637 186.5H640M643 186.5H646M649 186.5H652M655 186.5H658M661 186.5H664M667 186.5H670M673 186.5H676M679 186.5H682M685 186.5H688M691 186.5H694M697 186.5H700M703 186.5H706M709 186.5H712M715 186.5H718M721 186.5H724M727 186.5H730M733 186.5H736M13 219.5H16M19 219.5H22M25 219.5H28M31 219.5H34M37 219.5H40M43 219.5H46M49 219.5H52M55 219.5H58M61 219.5H64M67 219.5H70M73 219.5H76M79 219.5H82M85 219.5H88M91 219.5H94M97 219.5H100M103 219.5H106M109 219.5H112M115 219.5H118M121 219.5H124M127 219.5H130M133 219.5H136M139 219.5H142M145 219.5H148M151 219.5H154M157 219.5H160M163 219.5H166M169 219.5H172M175 219.5H178M181 219.5H184M187 219.5H190M193 219.5H196M199 219.5H202M205 219.5H208M211 219.5H214M217 219.5H220M223 219.5H226M229 219.5H232M235 219.5H238M241 219.5H244M247 219.5H250M253 219.5H256M259 219.5H262M265 219.5H268M271 219.5H274M277 219.5H280M283 219.5H286M289 219.5H292M295 219.5H298M301 219.5H304M307 219.5H310M313 219.5H316M319 219.5H322M325 219.5H328M331 219.5H334M337 219.5H340M343 219.5H346M349 219.5H352M355 219.5H358M361 219.5H364M367 219.5H370M373 219.5H376M379 219.5H382M385 219.5H388M391 219.5H394M397 219.5H400M403 219.5H406M409 219.5H412M415 219.5H418M421 219.5H424M427 219.5H430M433 219.5H436M439 219.5H442M445 219.5H448M451 219.5H454M457 219.5H460M463 219.5H466M469 219.5H472M475 219.5H478M481 219.5H484M487 219.5H490M493 219.5H496M499 219.5H502M505 219.5H508M511 219.5H514M517 219.5H520M523 219.5H526M529 219.5H532M535 219.5H538M541 219.5H544M547 219.5H550M553 219.5H556M559 219.5H562M565 219.5H568M571 219.5H574M577 219.5H580M583 219.5H586M589 219.5H592M595 219.5H598M601 219.5H604M607 219.5H610M613 219.5H616M619 219.5H622M625 219.5H628M631 219.5H634M637 219.5H640M643 219.5H646M649 219.5H652M655 219.5H658M661 219.5H664M667 219.5H670M673 219.5H676M679 219.5H682M685 219.5H688M691 219.5H694M697 219.5H700M703 219.5H706M709 219.5H712M715 219.5H718M721 219.5H724M727 219.5H730M733 219.5H736M13 252.5H16M19 252.5H22M25 252.5H28M31 252.5H34M37 252.5H40M43 252.5H46M49 252.5H52M55 252.5H58M61 252.5H64M67 252.5H70M73 252.5H76M79 252.5H82M85 252.5H88M91 252.5H94M97 252.5H100M103 252.5H106M109 252.5H112M115 252.5H118M121 252.5H124M127 252.5H130M133 252.5H136M139 252.5H142M145 252.5H148M151 252.5H154M157 252.5H160M163 252.5H166M169 252.5H172M175 252.5H178M181 252.5H184M187 252.5H190M193 252.5H196M199 252.5H202M205 252.5H208M211 252.5H214M217 252.5H220M223 252.5H226M229 252.5H232M235 252.5H238M241 252.5H244M247 252.5H250M253 252.5H256M259 252.5H262M265 252.5H268M271 252.5H274M277 252.5H280M283 252.5H286M289 252.5H292M295 252.5H298M301 252.5H304M307 252.5H310M313 252.5H316M319 252.5H322M325 252.5H328M331 252.5H334M337 252.5H340M343 252.5H346M349 252.5H352M355 252.5H358M361 252.5H364M367 252.5H370M373 252.5H376M379 252.5H382M385 252.5H388M391 252.5H394M397 252.5H400M403 252.5H406M409 252.5H412M415 252.5H418M421 252.5H424M427 252.5H430M433 252.5H436M439 252.5H442M445 252.5H448M451 252.5H454M457 252.5H460M463 252.5H466M469 252.5H472M475 252.5H478M481 252.5H484M487 252.5H490M493 252.5H496M499 252.5H502M505 252.5H508M511 252.5H514M517 252.5H520M523 252.5H526M529 252.5H532M535 252.5H538M541 252.5H544M547 252.5H550M553 252.5H556M559 252.5H562M565 252.5H568M571 252.5H574M577 252.5H580M583 252.5H586M589 252.5H592M595 252.5H598M601 252.5H604M607 252.5H610M613 252.5H616M619 252.5H622M625 252.5H628M631 252.5H634M637 252.5H640M643 252.5H646M649 252.5H652M655 252.5H658M661 252.5H664M667 252.5H670M673 252.5H676M679 252.5H682M685 252.5H688M691 252.5H694M697 252.5H700M703 252.5H706M709 252.5H712M715 252.5H718M721 252.5H724M727 252.5H730M733 252.5H736M13 285.5H16M19 285.5H22M25 285.5H28M31 285.5H34M37 285.5H40M43 285.5H46M49 285.5H52M55 285.5H58M61 285.5H64M67 285.5H70M73 285.5H76M79 285.5H82M85 285.5H88M91 285.5H94M97 285.5H100M103 285.5H106M109 285.5H112M115 285.5H118M121 285.5H124M127 285.5H130M133 285.5H136M139 285.5H142M145 285.5H148M151 285.5H154M157 285.5H160M163 285.5H166M169 285.5H172M175 285.5H178M181 285.5H184M187 285.5H190M193 285.5H196M199 285.5H202M205 285.5H208M211 285.5H214M217 285.5H220M223 285.5H226M229 285.5H232M235 285.5H238M241 285.5H244M247 285.5H250M253 285.5H256M259 285.5H262M265 285.5H268M271 285.5H274M277 285.5H280M283 285.5H286M289 285.5H292M295 285.5H298M301 285.5H304M307 285.5H310M313 285.5H316M319 285.5H322M325 285.5H328M331 285.5H334M337 285.5H340M343 285.5H346M349 285.5H352M355 285.5H358M361 285.5H364M367 285.5H370M373 285.5H376M379 285.5H382M385 285.5H388M391 285.5H394M397 285.5H400M403 285.5H406M409 285.5H412M415 285.5H418M421 285.5H424M427 285.5H430M433 285.5H436M439 285.5H442M445 285.5H448M451 285.5H454M457 285.5H460M463 285.5H466M469 285.5H472M475 285.5H478M481 285.5H484M487 285.5H490M493 285.5H496M499 285.5H502M505 285.5H508M511 285.5H514M517 285.5H520M523 285.5H526M529 285.5H532M535 285.5H538M541 285.5H544M547 285.5H550M553 285.5H556M559 285.5H562M565 285.5H568M571 285.5H574M577 285.5H580M583 285.5H586M589 285.5H592M595 285.5H598M601 285.5H604M607 285.5H610M613 285.5H616M619 285.5H622M625 285.5H628M631 285.5H634M637 285.5H640M643 285.5H646M649 285.5H652M655 285.5H658M661 285.5H664M667 285.5H670M673 285.5H676M679 285.5H682M685 285.5H688M691 285.5H694M697 285.5H700M703 285.5H706M709 285.5H712M715 285.5H718M721 285.5H724M727 285.5H730M733 285.5H736M13 360.5H16M19 360.5H22M25 360.5H28M31 360.5H34M37 360.5H40M43 360.5H46M49 360.5H52M55 360.5H58M61 360.5H64M67 360.5H70M73 360.5H76M79 360.5H82M85 360.5H88M91 360.5H94M97 360.5H100M103 360.5H106M109 360.5H112M115 360.5H118M121 360.5H124M127 360.5H130M133 360.5H136M139 360.5H142M145 360.5H148M151 360.5H154M157 360.5H160M163 360.5H166M169 360.5H172M175 360.5H178M181 360.5H184M187 360.5H190M193 360.5H196M199 360.5H202M205 360.5H208M211 360.5H214M217 360.5H220M223 360.5H226M229 360.5H232M235 360.5H238M241 360.5H244M247 360.5H250M253 360.5H256M259 360.5H262M265 360.5H268M271 360.5H274M277 360.5H280M283 360.5H286M289 360.5H292M295 360.5H298M301 360.5H304M307 360.5H310M313 360.5H316M319 360.5H322M325 360.5H328M331 360.5H334M337 360.5H340M343 360.5H346M349 360.5H352M355 360.5H358M361 360.5H364M367 360.5H370M373 360.5H376M379 360.5H382M385 360.5H388M391 360.5H394M397 360.5H400M403 360.5H406M409 360.5H412M415 360.5H418M421 360.5H424M427 360.5H430M433 360.5H436M439 360.5H442M445 360.5H448M451 360.5H454M457 360.5H460M463 360.5H466M469 360.5H472M475 360.5H478M481 360.5H484M487 360.5H490M493 360.5H496M499 360.5H502M505 360.5H508M511 360.5H514M517 360.5H520M523 360.5H526M529 360.5H532M535 360.5H538M541 360.5H544M547 360.5H550M553 360.5H556M559 360.5H562M565 360.5H568M571 360.5H574M577 360.5H580M583 360.5H586M589 360.5H592M595 360.5H598M601 360.5H604M607 360.5H610M613 360.5H616M619 360.5H622M625 360.5H628M631 360.5H634M637 360.5H640M643 360.5H646M649 360.5H652M655 360.5H658M661 360.5H664M667 360.5H670M673 360.5H676M679 360.5H682M685 360.5H688M691 360.5H694M697 360.5H700M703 360.5H706M709 360.5H712M715 360.5H718M721 360.5H724M727 360.5H730M733 360.5H736M13 551.5H16M19 551.5H22M25 551.5H28M31 551.5H34M37 551.5H40M43 551.5H46M49 551.5H52M55 551.5H58M61 551.5H64M67 551.5H70M73 551.5H76M79 551.5H82M85 551.5H88M91 551.5H94M97 551.5H100M103 551.5H106M109 551.5H112M115 551.5H118M121 551.5H124M127 551.5H130M133 551.5H136M139 551.5H142M145 551.5H148M151 551.5H154M157 551.5H160M163 551.5H166M169 551.5H172M175 551.5H178M181 551.5H184M187 551.5H190M193 551.5H196M199 551.5H202M205 551.5H208M211 551.5H214M217 551.5H220M223 551.5H226M229 551.5H232M235 551.5H238M241 551.5H244M247 551.5H250M253 551.5H256M259 551.5H262M265 551.5H268M271 551.5H274M277 551.5H280M283 551.5H286M289 551.5H292M295 551.5H298M301 551.5H304M307 551.5H310M313 551.5H316M319 551.5H322M325 551.5H328M331 551.5H334M337 551.5H340M343 551.5H346M349 551.5H352M355 551.5H358M361 551.5H364M367 551.5H370M373 551.5H376M379 551.5H382M385 551.5H388M391 551.5H394M397 551.5H400M403 551.5H406M409 551.5H412M415 551.5H418M421 551.5H424M427 551.5H430M433 551.5H436M439 551.5H442M445 551.5H448M451 551.5H454M457 551.5H460M463 551.5H466M469 551.5H472M475 551.5H478M481 551.5H484M487 551.5H490M493 551.5H496M499 551.5H502M505 551.5H508M511 551.5H514M517 551.5H520M523 551.5H526M529 551.5H532M535 551.5H538M541 551.5H544M547 551.5H550M553 551.5H556M559 551.5H562M565 551.5H568M571 551.5H574M577 551.5H580M583 551.5H586M589 551.5H592M595 551.5H598M601 551.5H604M607 551.5H610M613 551.5H616M619 551.5H622M625 551.5H628M631 551.5H634M637 551.5H640M643 551.5H646M649 551.5H652M655 551.5H658M661 551.5H664M667 551.5H670M673 551.5H676M679 551.5H682M685 551.5H688M691 551.5H694M697 551.5H700M703 551.5H706M709 551.5H712M715 551.5H718M721 551.5H724M727 551.5H730M733 551.5H736" stroke="#778899" stroke-width="1" fill="none" shape-rendering="crispEdges"/>
<path d="M164.5 35V37M164.5 40V43M164.5 46V49M164.5 52V55M164.5 58V61M164.5 64V67M164.5 70V73M164.5 76V79M164.5 82V85M164.5 88V91M164.5 94V97M164.5 100V103M164.5 106V109M164.5 112V115M164.5 118V121M164.5 124V127M164.5 130V133M164.5 136V139M164.5 142V145M164.5 148V151M164.5 154V157M164.5 160V163M164.5 166V169M164.5 172V175M164.5 178V181M164.5 184V187M164.5 190V193M164.5 196V199M164.5 202V205M164.5 208V211M164.5 214V217M164.5 220V223M164.5 226V229M164.5 232V235M164.5 238V241M164.5 244V247M164.5 250V253M164.5 256V259M164.5 262V265M164.5 268V271M164.5 274V277M164.5 280V283M164.5 286V288M164.5 292V295M164.5 298V301M164.5 304V307M164.5 310V313M164.5 316V319M164.5 322V325M164.5 328V331M164.5 334V337M164.5 340V343M164.5 346V349M164.5 352V355M164.5 358V361M164.5 364V367M164.5 370V373M164.5 376V379M164.5 382V385M164.5 388V391M164.5 394V397M164.5 400V403M164.5 406V409M164.5 412V415M164.5 424V427M164.5 430V433M164.5 436V439M164.5 442V445M164.5 448V451M164.5 454V457M164.5 460V463M164.5 466V469M164.5 472V475M164.5 478V481M164.5 484V487M164.5 490V493M164.5 496V499M164.5 502V505M164.5 508V511M164.5 514V517M164.5 520V523M164.5 526V529M164.5 532V535M164.5 538V541M164.5 544V547M164.5 550V552M356.5 35V37M356.5 40V43M356.5 46V49M356.5 52V55M356.5 58V61M356.5 64V67M356.5 70V73M356.5 76V79M356.5 82V85M356.5 88V91M356.5 94V97M356.5 100V103M356.5 106V109M356.5 112V115M356.5 118V121M356.5 124V127M356.5 130V133M356.5 136V139M356.5 142V145M356.5 148V151M356.5 154V157M356.5 160V163M356.5 166V169M356.5 172V175M356.5 178V181M356.5 184V187M356.5 190V193M356.5 196V199M356.5 202V205M356.5 208V211M356.5 214V217M356.5 220V223M356.5 226V229M356.5 232V235M356.5 238V241M356.5 244V247M356.5 250V253M356.5 256V259M356.5 262V265M356.5 268V271M356.5 274V277M356.5 280V283M356.5 286V288M356.5 292V295M356.5 298V301M356.5 304V307M356.5 310V313M356.5 316V319M356.5 322V325M356.5 328V331M356.5 334V337M356.5 340V343M356.5 346V349M356.5 352V355M356.5 358V361M356.5 364V367M356.5 370V373M356.5 376V379M356.5 382V385M356.5 388V391M356.5 394V397M356.5 400V403M356.5 406V409M356.5 412V415M356.5 424V427M356.5 430V433M356.5 436V439M356.5 442V445M356.5 448V451M356.5 454V457M356.5 460V463M356.5 466V469M356.5 472V475M356.5 478V481M356.5 484V487M356.5 490V493M356.5 496V499M356.5 502V505M356.5 508V511M356.5 514V517M356.5 520V523M356.5 526V529M356.5 532V535M356.5 538V541M356.5 544V547M356.5 550V552M548.5 35V37M548.5 40V43M548.5 46V49M548.5 52V55M548.5 58V61M548.5 64V67M548.5 70V73M548.5 76V79M548.5 82V85M548.5 88V91M548.5 94V97M548.5 100V103M548.5 106V109M548.5 112V115M548.5 118V121M548.5 124V127M548.5 130V133M548.5 136V139M548.5 142V145M548.5 148V151M548.5 154V157M548.5 160V163M548.5 166V169M548.5 172V175M548.5 178V181M548.5 184V187M548.5 190V193M548.5 196V199M548.5 202V205M548.5 208V211M548.5 214V217M548.5 220V223M548.5 226V229M548.5 232V235M548.5 238V241M548.5 244V247M548.5 250V253M548.5 256V259M548.5 262V265M548.5 268V271M548.5 274V277M548.5 280V283M548.5 286V288M548.5 292V295M548.5 298V301M548.5 304V307M548.5 310V313M548.5 316V319M548.5 322V325M548.5 328V331M548.5 334V337M548.5 340V343M548.5 346V349M548.5 352V355M548.5 358V361M548.5 364V367M548.5 370V373M548.5 376V379M548.5 382V385M548.5 388V391M548.5 394V397M548.5 400V403M548.5 406V409M548.5 412V415M548.5 424V427M548.5 430V433M548.5 436V439M548.5 442V445M548.5 448V451M548.5 454V457M548.5 460V463M548.5 466V469M548.5 472V475M548.5 478V481M548.5 484V487M548.5 490V493M548.5 496V499M548.5 502V505M548.5 508V511M548.5 514V517M548.5 520V523M548.5 526V529M548.5 532V535M548.5 538V541M548.5 544V547M548.5 550V552" stroke="#ffffff" stroke-width="1" fill="none" shape-rendering="crispEdges"/>
<rect x="12" y="105" width="727" height="1" fill="#8493a6"/>
<g clip-path="url(#cm)" shape-rendering="crispEdges">
<path d="M12.5 275V284M20.5 268V276M28.5 267V278M36.5 268V277M44.5 256V273M52.5 254V266M60.5 255V271M68.5 248V261M76.5 252V262M84.5 251V263M92.5 249V261M100.5 229V253M108.5 231V260M116.5 215V239M124.5 219V229M132.5 210V228M140.5 211V219M148.5 212V222M156.5 213V219M164.5 214V225M172.5 215V222M180.5 210V220M188.5 205V218M196.5 205V218M204.5 215V231M212.5 221V232M220.5 221V232M228.5 215V228M236.5 213V234M244.5 216V227M252.5 207V226M260.5 206V214M268.5 205V218M276.5 197V227M284.5 175V204M292.5 151V184M300.5 119V169M308.5 103V133M316.5 92V110M324.5 98V108M332.5 102V121M340.5 111V119M348.5 104V120M356.5 104V123M364.5 101V111M372.5 102V111M380.5 86V111M388.5 87V98M396.5 91V102M404.5 89V102M412.5 92V109M420.5 91V106M428.5 88V100M436.5 86V102M444.5 96V113M452.5 95V109M460.5 91V104M468.5 65V94M476.5 48V87M484.5 48V86M492.5 73V96M500.5 83V110M508.5 104V118M516.5 111V121M524.5 105V116M532.5 104V115M540.5 97V112M548.5 101V115M556.5 101V109M564.5 90V103M572.5 94V122M580.5 108V136M588.5 123V139M596.5 128V137M604.5 128V137M612.5 119V136M620.5 112V125M628.5 118V134M636.5 119V138M644.5 125V136M652.5 122V133M660.5 129V138M668.5 131V137M676.5 134V145M684.5 136V182M692.5 160V184M700.5 157V165M708.5 157V165M716.5 159V166M724.5 150V162M732.5 142V157" stroke="#00ff00" stroke-width="1" fill="none"/>
<rect x="10" y="275" width="5" height="1" fill="#00ff00"/>
<rect x="18" y="269" width="5" height="7" fill="#00ff00"/>
<rect x="19" y="270" width="3" height="5" fill="#000"/>
<rect x="26" y="269" width="5" height="5" fill="#00ff00"/>
<rect x="27" y="270" width="3" height="3" fill="#fff"/>
<rect x="34" y="270" width="5" height="4" fill="#00ff00"/>
<rect x="35" y="271" width="3" height="2" fill="#000"/>
<rect x="42" y="258" width="5" height="13" fill="#00ff00"/>
<rect x="43" y="259" width="3" height="11" fill="#000"/>
<rect x="50" y="258" width="5" height="7" fill="#00ff00"/>
<rect x="51" y="259" width="3" height="5" fill="#fff"/>
<rect x="58" y="260" width="5" height="5" fill="#00ff00"/>
<rect x="59" y="261" width="3" height="3" fill="#000"/>
<rect x="66" y="255" width="5" height="6" fill="#00ff00"/>
<rect x="67" y="256" width="3" height="4" fill="#000"/>
<rect x="74" y="255" width="5" height="6" fill="#00ff00"/>
<rect x="75" y="256" width="3" height="4" fill="#fff"/>
<rect x="82" y="253" width="5" height="8" fill="#00ff00"/>
<rect x="83" y="254" width="3" height="6" fill="#000"/>
<rect x="90" y="253" width="5" height="1" fill="#00ff00"/>
<rect x="98" y="246" width="5" height="7" fill="#00ff00"/>
<rect x="99" y="247" width="3" height="5" fill="#000"/>
<rect x="106" y="231" width="5" height="16" fill="#00ff00"/>
<rect x="107" y="232" width="3" height="14" fill="#000"/>
<rect x="114" y="221" width="5" height="11" fill="#00ff00"/>
<rect x="115" y="222" width="3" height="9" fill="#000"/>
<rect x="122" y="222" width="5" height="3" fill="#00ff00"/>
<rect x="123" y="223" width="3" height="1" fill="#fff"/>
<rect x="130" y="214" width="5" height="11" fill="#00ff00"/>
<rect x="131" y="215" width="3" height="9" fill="#000"/>
<rect x="138" y="214" width="5" height="5" fill="#00ff00"/>
<rect x="139" y="215" width="3" height="3" fill="#fff"/>
<rect x="146" y="215" width="5" height="4" fill="#00ff00"/>
<rect x="147" y="216" width="3" height="2" fill="#000"/>
<rect x="154" y="214" width="5" height="2" fill="#00ff00"/>
<rect x="162" y="214" width="5" height="5" fill="#00ff00"/>
<rect x="163" y="215" width="3" height="3" fill="#fff"/>
<rect x="170" y="219" width="5" height="1" fill="#00ff00"/>
<rect x="178" y="211" width="5" height="9" fill="#00ff00"/>
<rect x="179" y="212" width="3" height="7" fill="#000"/>
<rect x="186" y="212" width="5" height="1" fill="#00ff00"/>
<rect x="194" y="213" width="5" height="4" fill="#00ff00"/>
<rect x="195" y="214" width="3" height="2" fill="#fff"/>
<rect x="202" y="217" width="5" height="10" fill="#00ff00"/>
<rect x="203" y="218" width="3" height="8" fill="#fff"/>
<rect x="210" y="226" width="5" height="4" fill="#00ff00"/>
<rect x="211" y="227" width="3" height="2" fill="#fff"/>
<rect x="218" y="223" width="5" height="7" fill="#00ff00"/>
<rect x="219" y="224" width="3" height="5" fill="#000"/>
<rect x="226" y="223" width="5" height="4" fill="#00ff00"/>
<rect x="227" y="224" width="3" height="2" fill="#fff"/>
<rect x="234" y="218" width="5" height="9" fill="#00ff00"/>
<rect x="235" y="219" width="3" height="7" fill="#000"/>
<rect x="242" y="219" width="5" height="5" fill="#00ff00"/>
<rect x="243" y="220" width="3" height="3" fill="#fff"/>
<rect x="250" y="210" width="5" height="13" fill="#00ff00"/>
<rect x="251" y="211" width="3" height="11" fill="#000"/>
<rect x="258" y="206" width="5" height="5" fill="#00ff00"/>
<rect x="259" y="207" width="3" height="3" fill="#000"/>
<rect x="266" y="206" width="5" height="10" fill="#00ff00"/>
<rect x="267" y="207" width="3" height="8" fill="#fff"/>
<rect x="274" y="202" width="5" height="13" fill="#00ff00"/>
<rect x="275" y="203" width="3" height="11" fill="#000"/>
<rect x="282" y="182" width="5" height="20" fill="#00ff00"/>
<rect x="283" y="183" width="3" height="18" fill="#000"/>
<rect x="290" y="163" width="5" height="19" fill="#00ff00"/>
<rect x="291" y="164" width="3" height="17" fill="#000"/>
<rect x="298" y="124" width="5" height="40" fill="#00ff00"/>
<rect x="299" y="125" width="3" height="38" fill="#000"/>
<rect x="306" y="108" width="5" height="17" fill="#00ff00"/>
<rect x="307" y="109" width="3" height="15" fill="#000"/>
<rect x="314" y="100" width="5" height="9" fill="#00ff00"/>
<rect x="315" y="101" width="3" height="7" fill="#000"/>
<rect x="322" y="98" width="5" height="8" fill="#00ff00"/>
<rect x="323" y="99" width="3" height="6" fill="#fff"/>
<rect x="330" y="104" width="5" height="10" fill="#00ff00"/>
<rect x="331" y="105" width="3" height="8" fill="#fff"/>
<rect x="338" y="114" width="5" height="1" fill="#00ff00"/>
<rect x="346" y="114" width="5" height="6" fill="#00ff00"/>
<rect x="347" y="115" width="3" height="4" fill="#fff"/>
<rect x="354" y="104" width="5" height="16" fill="#00ff00"/>
<rect x="355" y="105" width="3" height="14" fill="#000"/>
<rect x="362" y="102" width="5" height="3" fill="#00ff00"/>
<rect x="363" y="103" width="3" height="1" fill="#fff"/>
<rect x="370" y="102" width="5" height="9" fill="#00ff00"/>
<rect x="371" y="103" width="3" height="7" fill="#fff"/>
<rect x="378" y="91" width="5" height="20" fill="#00ff00"/>
<rect x="379" y="92" width="3" height="18" fill="#000"/>
<rect x="386" y="91" width="5" height="6" fill="#00ff00"/>
<rect x="387" y="92" width="3" height="4" fill="#fff"/>
<rect x="394" y="95" width="5" height="7" fill="#00ff00"/>
<rect x="395" y="96" width="3" height="5" fill="#fff"/>
<rect x="402" y="94" width="5" height="8" fill="#00ff00"/>
<rect x="403" y="95" width="3" height="6" fill="#000"/>
<rect x="410" y="94" width="5" height="10" fill="#00ff00"/>
<rect x="411" y="95" width="3" height="8" fill="#fff"/>
<rect x="418" y="95" width="5" height="9" fill="#00ff00"/>
<rect x="419" y="96" width="3" height="7" fill="#000"/>
<rect x="426" y="95" width="5" height="3" fill="#00ff00"/>
<rect x="427" y="96" width="3" height="1" fill="#fff"/>
<rect x="434" y="97" width="5" height="1" fill="#00ff00"/>
<rect x="442" y="96" width="5" height="9" fill="#00ff00"/>
<rect x="443" y="97" width="3" height="7" fill="#fff"/>
<rect x="450" y="97" width="5" height="8" fill="#00ff00"/>
<rect x="451" y="98" width="3" height="6" fill="#000"/>
<rect x="458" y="91" width="5" height="6" fill="#00ff00"/>
<rect x="459" y="92" width="3" height="4" fill="#000"/>
<rect x="466" y="72" width="5" height="20" fill="#00ff00"/>
<rect x="467" y="73" width="3" height="18" fill="#000"/>
<rect x="474" y="48" width="5" height="25" fill="#00ff00"/>
<rect x="475" y="49" width="3" height="23" fill="#000"/>
<rect x="482" y="48" width="5" height="29" fill="#00ff00"/>
<rect x="483" y="49" width="3" height="27" fill="#fff"/>
<rect x="490" y="76" width="5" height="8" fill="#00ff00"/>
<rect x="491" y="77" width="3" height="6" fill="#fff"/>
<rect x="498" y="83" width="5" height="22" fill="#00ff00"/>
<rect x="499" y="84" width="3" height="20" fill="#fff"/>
<rect x="506" y="104" width="5" height="12" fill="#00ff00"/>
<rect x="507" y="105" width="3" height="10" fill="#fff"/>
<rect x="514" y="113" width="5" height="3" fill="#00ff00"/>
<rect x="515" y="114" width="3" height="1" fill="#000"/>
<rect x="522" y="110" width="5" height="4" fill="#00ff00"/>
<rect x="523" y="111" width="3" height="2" fill="#000"/>
<rect x="530" y="104" width="5" height="7" fill="#00ff00"/>
<rect x="531" y="105" width="3" height="5" fill="#000"/>
<rect x="538" y="105" width="5" height="1" fill="#00ff00"/>
<rect x="546" y="109" width="5" height="3" fill="#00ff00"/>
<rect x="547" y="110" width="3" height="1" fill="#000"/>
<rect x="554" y="101" width="5" height="8" fill="#00ff00"/>
<rect x="555" y="102" width="3" height="6" fill="#000"/>
<rect x="562" y="94" width="5" height="7" fill="#00ff00"/>
<rect x="563" y="95" width="3" height="5" fill="#000"/>
<rect x="570" y="94" width="5" height="24" fill="#00ff00"/>
<rect x="571" y="95" width="3" height="22" fill="#fff"/>
<rect x="578" y="118" width="5" height="8" fill="#00ff00"/>
<rect x="579" y="119" width="3" height="6" fill="#fff"/>
<rect x="586" y="125" width="5" height="11" fill="#00ff00"/>
<rect x="587" y="126" width="3" height="9" fill="#fff"/>
<rect x="594" y="129" width="5" height="7" fill="#00ff00"/>
<rect x="595" y="130" width="3" height="5" fill="#000"/>
<rect x="602" y="129" width="5" height="4" fill="#00ff00"/>
<rect x="603" y="130" width="3" height="2" fill="#fff"/>
<rect x="610" y="121" width="5" height="13" fill="#00ff00"/>
<rect x="611" y="122" width="3" height="11" fill="#000"/>
<rect x="618" y="118" width="5" height="3" fill="#00ff00"/>
<rect x="619" y="119" width="3" height="1" fill="#fff"/>
<rect x="626" y="118" width="5" height="8" fill="#00ff00"/>
<rect x="627" y="119" width="3" height="6" fill="#fff"/>
<rect x="634" y="125" width="5" height="10" fill="#00ff00"/>
<rect x="635" y="126" width="3" height="8" fill="#fff"/>
<rect x="642" y="125" width="5" height="10" fill="#00ff00"/>
<rect x="643" y="126" width="3" height="8" fill="#000"/>
<rect x="650" y="125" width="5" height="7" fill="#00ff00"/>
<rect x="651" y="126" width="3" height="5" fill="#fff"/>
<rect x="658" y="131" width="5" height="3" fill="#00ff00"/>
<rect x="659" y="132" width="3" height="1" fill="#fff"/>
<rect x="666" y="134" width="5" height="1" fill="#00ff00"/>
<rect x="674" y="134" width="5" height="5" fill="#00ff00"/>
<rect x="675" y="135" width="3" height="3" fill="#fff"/>
<rect x="682" y="137" width="5" height="40" fill="#00ff00"/>
<rect x="683" y="138" width="3" height="38" fill="#fff"/>
<rect x="690" y="162" width="5" height="15" fill="#00ff00"/>
<rect x="691" y="163" width="3" height="13" fill="#000"/>
<rect x="698" y="162" width="5" height="1" fill="#00ff00"/>
<rect x="706" y="161" width="5" height="2" fill="#00ff00"/>
<rect x="714" y="161" width="5" height="1" fill="#00ff00"/>
<rect x="722" y="151" width="5" height="11" fill="#00ff00"/>
<rect x="723" y="152" width="3" height="9" fill="#000"/>
<rect x="730" y="147" width="5" height="5" fill="#00ff00"/>
<rect x="731" y="148" width="3" height="3" fill="#000"/>
</g>
<g clip-path="url(#cm)">
<polygon points="99.7,257.3 109.4,267 109.4,270.8 101.4,262.8 101.4,278.7 98,278.7 98,262.8 90,270.8 90,267" fill="#8fd0f6"/><path d="M101.9 263.5 L109.8 271.4 M101.9 263.8 V278.7" stroke="#6b5a2a" stroke-width="0.9" fill="none" opacity="0.8"/><rect x="100.2" y="263.3" width="1" height="15.4" fill="#5fa6dc" opacity="0.7"/>
<polygon points="91.3,261.1 89.65,265.44 85.06,264.7 88,268.3 85.06,271.9 89.65,271.16 91.3,275.5 92.95,271.16 97.54,271.9 94.6,268.3 97.54,264.7 92.95,265.44" fill="#8fd0f6"/>
<polygon points="123.8,233.9 133.5,243.6 133.5,247.4 125.5,239.4 125.5,255.3 122.1,255.3 122.1,239.4 114.1,247.4 114.1,243.6" fill="#8fd0f6"/><path d="M126 240.1 L133.9 248 M126 240.4 V255.3" stroke="#6b5a2a" stroke-width="0.9" fill="none" opacity="0.8"/><rect x="124.3" y="239.9" width="1" height="15.4" fill="#5fa6dc" opacity="0.7"/>
<polygon points="115.5,239.1 113.85,243.44 109.26,242.7 112.2,246.3 109.26,249.9 113.85,249.16 115.5,253.5 117.15,249.16 121.74,249.9 118.8,246.3 121.74,242.7 117.15,243.44" fill="#8fd0f6"/>
<polygon points="139.7,224.1 149.4,233.8 149.4,237.6 141.4,229.6 141.4,245.5 138,245.5 138,229.6 130,237.6 130,233.8" fill="#8fd0f6"/><path d="M141.9 230.3 L149.8 238.2 M141.9 230.6 V245.5" stroke="#6b5a2a" stroke-width="0.9" fill="none" opacity="0.8"/><rect x="140.2" y="230.1" width="1" height="15.4" fill="#5fa6dc" opacity="0.7"/>
<polygon points="131.5,227.7 129.85,232.04 125.26,231.3 128.2,234.9 125.26,238.5 129.85,237.76 131.5,242.1 133.15,237.76 137.74,238.5 134.8,234.9 137.74,231.3 133.15,232.04" fill="#8fd0f6"/>
<polygon points="259.9,218.5 269.6,228.2 269.6,232 261.6,224 261.6,239.9 258.2,239.9 258.2,224 250.2,232 250.2,228.2" fill="#8fd0f6"/><path d="M262.1 224.7 L270 232.6 M262.1 225 V239.9" stroke="#6b5a2a" stroke-width="0.9" fill="none" opacity="0.8"/><rect x="260.4" y="224.5" width="1" height="15.4" fill="#5fa6dc" opacity="0.7"/>
<polygon points="251.6,229.8 249.95,234.14 245.36,233.4 248.3,237 245.36,240.6 249.95,239.86 251.6,244.2 253.25,239.86 257.84,240.6 254.9,237 257.84,233.4 253.25,234.14" fill="#8fd0f6"/>
<polygon points="284,208.9 293.7,218.6 293.7,222.4 285.7,214.4 285.7,230.3 282.3,230.3 282.3,214.4 274.3,222.4 274.3,218.6" fill="#8fd0f6"/><path d="M286.2 215.1 L294.1 223 M286.2 215.4 V230.3" stroke="#6b5a2a" stroke-width="0.9" fill="none" opacity="0.8"/><rect x="284.5" y="214.9" width="1" height="15.4" fill="#5fa6dc" opacity="0.7"/>
<polygon points="275.5,226.4 273.85,230.74 269.26,230 272.2,233.6 269.26,237.2 273.85,236.46 275.5,240.8 277.15,236.46 281.74,237.2 278.8,233.6 281.74,230 277.15,230.74" fill="#8fd0f6"/>
<polygon points="331.7,123.5 341.4,133.2 341.4,137 333.4,129 333.4,144.9 330,144.9 330,129 322,137 322,133.2" fill="#8fd0f6"/><path d="M333.9 129.7 L341.8 137.6 M333.9 130 V144.9" stroke="#6b5a2a" stroke-width="0.9" fill="none" opacity="0.8"/><rect x="332.2" y="129.5" width="1" height="15.4" fill="#5fa6dc" opacity="0.7"/>
<polygon points="323.5,108.1 321.85,112.44 317.26,111.7 320.2,115.3 317.26,118.9 321.85,118.16 323.5,122.5 325.15,118.16 329.74,118.9 326.8,115.3 329.74,111.7 325.15,112.44" fill="#8fd0f6"/>
<polygon points="403.7,106 413.4,115.7 413.4,119.5 405.4,111.5 405.4,127.4 402,127.4 402,111.5 394,119.5 394,115.7" fill="#8fd0f6"/><path d="M405.9 112.2 L413.8 120.1 M405.9 112.5 V127.4" stroke="#6b5a2a" stroke-width="0.9" fill="none" opacity="0.8"/><rect x="404.2" y="112" width="1" height="15.4" fill="#5fa6dc" opacity="0.7"/>
<polygon points="395.2,103.6 393.55,107.94 388.96,107.2 391.9,110.8 388.96,114.4 393.55,113.66 395.2,118 396.85,113.66 401.44,114.4 398.5,110.8 401.44,107.2 396.85,107.94" fill="#8fd0f6"/>
<polygon points="580.85,100.5 590.55,90.8 590.55,87 582.55,95 582.55,79.1 579.15,79.1 579.15,95 571.15,87 571.15,90.8" fill="#ff0000"/>
<polygon points="571.6,74.4 569.9,78.66 565.36,78 568.2,81.6 565.36,85.2 569.9,84.54 571.6,88.8 573.3,84.54 577.84,85.2 575,81.6 577.84,78 573.3,78.66" fill="#ff0000"/>
<polygon points="668.75,122 678.45,112.3 678.45,108.5 670.45,116.5 670.45,100.6 667.05,100.6 667.05,116.5 659.05,108.5 659.05,112.3" fill="#ff0000"/>
<polygon points="659.7,113.3 658,117.56 653.46,116.9 656.3,120.5 653.46,124.1 658,123.44 659.7,127.7 661.4,123.44 665.94,124.1 663.1,120.5 665.94,116.9 661.4,117.56" fill="#ff0000"/>
<polygon points="684.7,129 694.4,119.3 694.4,115.5 686.4,123.5 686.4,107.6 683,107.6 683,123.5 675,115.5 675,119.3" fill="#ff0000"/>
<polygon points="675.9,119 674.2,123.26 669.66,122.6 672.5,126.2 669.66,129.8 674.2,129.14 675.9,133.4 677.6,129.14 682.14,129.8 679.3,126.2 682.14,122.6 677.6,123.26" fill="#ff0000"/>
</g>
<g clip-path="url(#c1)" fill="none" stroke-linejoin="miter" shape-rendering="crispEdges">
<polyline points="12,317.9 20,317.9 28,330 36,331.5 44,331.5 52,319 60,311.2 68,310 76,314 84,314.5 92,311.8 100,311.8 108,311.2 116,306.7 124,306.5 132,306 140,305.2 148,306.7 156,307.4 164,316.8 172,331.2 180,331.2 188,332 196,352.4 204,366.9 212,385.9 220,393.7 228,395.9 236,388 244,386.3 252,355.8 260,329 268,309.6 276,308.3 284,307.4 292,306.7 300,306 308,305.6 316,305.6 324,305.6 332,310 340,320 348,333 356,341.3 364,347.5 372,370.7 380,355.8 388,327.9 396,315 404,312.3 412,327.9 420,333.5 428,345.7 436,359.1 444,392.6 452,376 460,349.8 468,341.7 476,321.2 484,321.2 492,316.3 500,336.8 508,361.3 516,392.1 524,403.7 532,407 540,398.1 548,389.2 556,356.9 564,327.7 572,341.3 580,365.8 588,385.9 596,399.3 604,405.9 612,401.5 620,392.6 628,374.7 636,369.2 644,350.2 652,350 660,379.5 668,394.8 676,411.3 684,411.3 692,410.6 700,407.9 708,407.5 716,399 724,385.3 732,364.7" stroke="#ff0000" stroke-width="2"/>
<polyline points="12,342.3 20,343.1 28,345.9 36,349 44,353 52,356.4 60,359.6 68,364.2 72,369.6 77,374.6 82,373.1 87,369.1 92,363.1 100,353 108,341.4 116,330.3 124,319.1 132,311.8 140,306.2 148,305.6 156,305.1 188,305.6 196,306.6 204,308.9 212,312.9 220,315.1 228,318.5 236,321.1 244,324.5 252,325.6 260,326.6 316,326.6 324,324.6 332,321.8 340,319.6 348,316.9 356,315.1 372,311.8 388,309.6 396,308.4 420,308.4 428,309.6 444,312.9 460,313.8 492,314 500,320.7 508,330.7 516,340.8 524,346.3 532,349.7 540,357.5 548,366.4 556,373.1 564,373.1 572,380.9 580,388.7 588,390.9 596,395.4 604,398.7 612,401 620,403.9 636,406.5 652,408.6 668,409.2 676,410.6 692,410.6 700,409.2 716,410.6 732,411.6" stroke="#00ffff" stroke-width="2"/>
<polyline points="12,375.8 20,373.6 28,370.7 36,368 44,365.4 52,362.5 60,359.6 68,358 76,357.3 84,356.9 92,352.4 100,348.4 108,343.5 116,337.5 124,333 132,330.1 140,328.3 156,325.7 172,323 188,320.1 204,318.5 220,315.5 236,315.6 292,315.6 308,312.3 324,309.6 340,307.4 348,306 356,306 460,306.5 492,306.7 500,307.8 516,311.2 540,313.4 556,315.6 564,315.6 572,319.5 588,325.2 604,331.2 620,337.9 636,346.9 652,355.6 668,364.7 684,376.4 700,388.7 716,399 724,402.4 732,403.1" stroke="#ffff00" stroke-width="2"/>
</g>
<g clip-path="url(#c2)" fill="none" stroke-linejoin="miter" shape-rendering="crispEdges">
<polyline points="12,490.6 20,486.8 28,488.6 36,487.5 44,478.4 52,482.9 60,480 68,477 76,481.1 84,476.1 92,474.8 100,471.6 108,461.9 116,459.6 124,460.8 132,456.7 140,460.8 148,460.3 156,458.9 164,463 172,463.5 180,460.8 188,461.9 196,467.5 204,478.4 212,479.3 220,476.6 228,478.9 236,473.9 244,478.4 252,469.4 260,467.1 268,474.8 276,470.3 284,460.8 292,455.1 300,444.5 308,442.6 316,440.8 324,447.2 332,451.7 340,452.8 348,455.8 356,452.1 364,451.7 372,458 380,454 388,455.8 396,459.6 404,458.9 412,464.8 420,462.6 428,462.6 436,463 444,468.7 452,466.4 460,464.8 468,459.6 476,451.2 484,468.7 492,473.2 500,482.3 508,487.5 516,487.5 524,486.8 532,483.8 540,484.5 548,485.7 556,482.3 564,479.3 572,491.3 580,493.6 588,498.8 596,495.8 604,496.5 612,490.6 620,488.4 628,492 636,495.8 644,492 652,494 660,495.7 668,496 676,497.7 684,513.8 692,504.2 700,504.2 708,504.2 716,504.2 724,496 732,493.6" stroke="#1e90ff" stroke-width="2"/>
</g>
<path d="M13 303.5H16M19 303.5H22M25 303.5H28M31 303.5H34M37 303.5H40M43 303.5H46M49 303.5H52M55 303.5H58M61 303.5H64M67 303.5H70M73 303.5H76M79 303.5H82M85 303.5H88M91 303.5H94M97 303.5H100M103 303.5H106M109 303.5H112M115 303.5H118M121 303.5H124M127 303.5H130M133 303.5H136M139 303.5H142M145 303.5H148M151 303.5H154M157 303.5H160M163 303.5H166M169 303.5H172M175 303.5H178M181 303.5H184M187 303.5H190M193 303.5H196M199 303.5H202M205 303.5H208M211 303.5H214M217 303.5H220M223 303.5H226M229 303.5H232M235 303.5H238M241 303.5H244M247 303.5H250M253 303.5H256M259 303.5H262M265 303.5H268M271 303.5H274M277 303.5H280M283 303.5H286M289 303.5H292M295 303.5H298M301 303.5H304M307 303.5H310M313 303.5H316M319 303.5H322M325 303.5H328M331 303.5H334M337 303.5H340M343 303.5H346M349 303.5H352M355 303.5H358M361 303.5H364M367 303.5H370M373 303.5H376M379 303.5H382M385 303.5H388M391 303.5H394M397 303.5H400M403 303.5H406M409 303.5H412M415 303.5H418M421 303.5H424M427 303.5H430M433 303.5H436M439 303.5H442M445 303.5H448M451 303.5H454M457 303.5H460M463 303.5H466M469 303.5H472M475 303.5H478M481 303.5H484M487 303.5H490M493 303.5H496M499 303.5H502M505 303.5H508M511 303.5H514M517 303.5H520M523 303.5H526M529 303.5H532M535 303.5H538M541 303.5H544M547 303.5H550M553 303.5H556M559 303.5H562M565 303.5H568M571 303.5H574M577 303.5H580M583 303.5H586M589 303.5H592M595 303.5H598M601 303.5H604M607 303.5H610M613 303.5H616M619 303.5H622M625 303.5H628M631 303.5H634M637 303.5H640M643 303.5H646M649 303.5H652M655 303.5H658M661 303.5H664M667 303.5H670M673 303.5H676M679 303.5H682M685 303.5H688M691 303.5H694M697 303.5H700M703 303.5H706M709 303.5H712M715 303.5H718M721 303.5H724M727 303.5H730M733 303.5H736M13 314.5H16M19 314.5H22M25 314.5H28M31 314.5H34M37 314.5H40M43 314.5H46M49 314.5H52M55 314.5H58M61 314.5H64M67 314.5H70M73 314.5H76M79 314.5H82M85 314.5H88M91 314.5H94M97 314.5H100M103 314.5H106M109 314.5H112M115 314.5H118M121 314.5H124M127 314.5H130M133 314.5H136M139 314.5H142M145 314.5H148M151 314.5H154M157 314.5H160M163 314.5H166M169 314.5H172M175 314.5H178M181 314.5H184M187 314.5H190M193 314.5H196M199 314.5H202M205 314.5H208M211 314.5H214M217 314.5H220M223 314.5H226M229 314.5H232M235 314.5H238M241 314.5H244M247 314.5H250M253 314.5H256M259 314.5H262M265 314.5H268M271 314.5H274M277 314.5H280M283 314.5H286M289 314.5H292M295 314.5H298M301 314.5H304M307 314.5H310M313 314.5H316M319 314.5H322M325 314.5H328M331 314.5H334M337 314.5H340M343 314.5H346M349 314.5H352M355 314.5H358M361 314.5H364M367 314.5H370M373 314.5H376M379 314.5H382M385 314.5H388M391 314.5H394M397 314.5H400M403 314.5H406M409 314.5H412M415 314.5H418M421 314.5H424M427 314.5H430M433 314.5H436M439 314.5H442M445 314.5H448M451 314.5H454M457 314.5H460M463 314.5H466M469 314.5H472M475 314.5H478M481 314.5H484M487 314.5H490M493 314.5H496M499 314.5H502M505 314.5H508M511 314.5H514M517 314.5H520M523 314.5H526M529 314.5H532M535 314.5H538M541 314.5H544M547 314.5H550M553 314.5H556M559 314.5H562M565 314.5H568M571 314.5H574M577 314.5H580M583 314.5H586M589 314.5H592M595 314.5H598M601 314.5H604M607 314.5H610M613 314.5H616M619 314.5H622M625 314.5H628M631 314.5H634M637 314.5H640M643 314.5H646M649 314.5H652M655 314.5H658M661 314.5H664M667 314.5H670M673 314.5H676M679 314.5H682M685 314.5H688M691 314.5H694M697 314.5H700M703 314.5H706M709 314.5H712M715 314.5H718M721 314.5H724M727 314.5H730M733 314.5H736M13 332.5H16M19 332.5H22M25 332.5H28M31 332.5H34M37 332.5H40M43 332.5H46M49 332.5H52M55 332.5H58M61 332.5H64M67 332.5H70M73 332.5H76M79 332.5H82M85 332.5H88M91 332.5H94M97 332.5H100M103 332.5H106M109 332.5H112M115 332.5H118M121 332.5H124M127 332.5H130M133 332.5H136M139 332.5H142M145 332.5H148M151 332.5H154M157 332.5H160M163 332.5H166M169 332.5H172M175 332.5H178M181 332.5H184M187 332.5H190M193 332.5H196M199 332.5H202M205 332.5H208M211 332.5H214M217 332.5H220M223 332.5H226M229 332.5H232M235 332.5H238M241 332.5H244M247 332.5H250M253 332.5H256M259 332.5H262M265 332.5H268M271 332.5H274M277 332.5H280M283 332.5H286M289 332.5H292M295 332.5H298M301 332.5H304M307 332.5H310M313 332.5H316M319 332.5H322M325 332.5H328M331 332.5H334M337 332.5H340M343 332.5H346M349 332.5H352M355 332.5H358M361 332.5H364M367 332.5H370M373 332.5H376M379 332.5H382M385 332.5H388M391 332.5H394M397 332.5H400M403 332.5H406M409 332.5H412M415 332.5H418M421 332.5H424M427 332.5H430M433 332.5H436M439 332.5H442M445 332.5H448M451 332.5H454M457 332.5H460M463 332.5H466M469 332.5H472M475 332.5H478M481 332.5H484M487 332.5H490M493 332.5H496M499 332.5H502M505 332.5H508M511 332.5H514M517 332.5H520M523 332.5H526M529 332.5H532M535 332.5H538M541 332.5H544M547 332.5H550M553 332.5H556M559 332.5H562M565 332.5H568M571 332.5H574M577 332.5H580M583 332.5H586M589 332.5H592M595 332.5H598M601 332.5H604M607 332.5H610M613 332.5H616M619 332.5H622M625 332.5H628M631 332.5H634M637 332.5H640M643 332.5H646M649 332.5H652M655 332.5H658M661 332.5H664M667 332.5H670M673 332.5H676M679 332.5H682M685 332.5H688M691 332.5H694M697 332.5H700M703 332.5H706M709 332.5H712M715 332.5H718M721 332.5H724M727 332.5H730M733 332.5H736M13 389.5H16M19 389.5H22M25 389.5H28M31 389.5H34M37 389.5H40M43 389.5H46M49 389.5H52M55 389.5H58M61 389.5H64M67 389.5H70M73 389.5H76M79 389.5H82M85 389.5H88M91 389.5H94M97 389.5H100M103 389.5H106M109 389.5H112M115 389.5H118M121 389.5H124M127 389.5H130M133 389.5H136M139 389.5H142M145 389.5H148M151 389.5H154M157 389.5H160M163 389.5H166M169 389.5H172M175 389.5H178M181 389.5H184M187 389.5H190M193 389.5H196M199 389.5H202M205 389.5H208M211 389.5H214M217 389.5H220M223 389.5H226M229 389.5H232M235 389.5H238M241 389.5H244M247 389.5H250M253 389.5H256M259 389.5H262M265 389.5H268M271 389.5H274M277 389.5H280M283 389.5H286M289 389.5H292M295 389.5H298M301 389.5H304M307 389.5H310M313 389.5H316M319 389.5H322M325 389.5H328M331 389.5H334M337 389.5H340M343 389.5H346M349 389.5H352M355 389.5H358M361 389.5H364M367 389.5H370M373 389.5H376M379 389.5H382M385 389.5H388M391 389.5H394M397 389.5H400M403 389.5H406M409 389.5H412M415 389.5H418M421 389.5H424M427 389.5H430M433 389.5H436M439 389.5H442M445 389.5H448M451 389.5H454M457 389.5H460M463 389.5H466M469 389.5H472M475 389.5H478M481 389.5H484M487 389.5H490M493 389.5H496M499 389.5H502M505 389.5H508M511 389.5H514M517 389.5H520M523 389.5H526M529 389.5H532M535 389.5H538M541 389.5H544M547 389.5H550M553 389.5H556M559 389.5H562M565 389.5H568M571 389.5H574M577 389.5H580M583 389.5H586M589 389.5H592M595 389.5H598M601 389.5H604M607 389.5H610M613 389.5H616M619 389.5H622M625 389.5H628M631 389.5H634M637 389.5H640M643 389.5H646M649 389.5H652M655 389.5H658M661 389.5H664M667 389.5H670M673 389.5H676M679 389.5H682M685 389.5H688M691 389.5H694M697 389.5H700M703 389.5H706M709 389.5H712M715 389.5H718M721 389.5H724M727 389.5H730M733 389.5H736M13 406.5H16M19 406.5H22M25 406.5H28M31 406.5H34M37 406.5H40M43 406.5H46M49 406.5H52M55 406.5H58M61 406.5H64M67 406.5H70M73 406.5H76M79 406.5H82M85 406.5H88M91 406.5H94M97 406.5H100M103 406.5H106M109 406.5H112M115 406.5H118M121 406.5H124M127 406.5H130M133 406.5H136M139 406.5H142M145 406.5H148M151 406.5H154M157 406.5H160M163 406.5H166M169 406.5H172M175 406.5H178M181 406.5H184M187 406.5H190M193 406.5H196M199 406.5H202M205 406.5H208M211 406.5H214M217 406.5H220M223 406.5H226M229 406.5H232M235 406.5H238M241 406.5H244M247 406.5H250M253 406.5H256M259 406.5H262M265 406.5H268M271 406.5H274M277 406.5H280M283 406.5H286M289 406.5H292M295 406.5H298M301 406.5H304M307 406.5H310M313 406.5H316M319 406.5H322M325 406.5H328M331 406.5H334M337 406.5H340M343 406.5H346M349 406.5H352M355 406.5H358M361 406.5H364M367 406.5H370M373 406.5H376M379 406.5H382M385 406.5H388M391 406.5H394M397 406.5H400M403 406.5H406M409 406.5H412M415 406.5H418M421 406.5H424M427 406.5H430M433 406.5H436M439 406.5H442M445 406.5H448M451 406.5H454M457 406.5H460M463 406.5H466M469 406.5H472M475 406.5H478M481 406.5H484M487 406.5H490M493 406.5H496M499 406.5H502M505 406.5H508M511 406.5H514M517 406.5H520M523 406.5H526M529 406.5H532M535 406.5H538M541 406.5H544M547 406.5H550M553 406.5H556M559 406.5H562M565 406.5H568M571 406.5H574M577 406.5H580M583 406.5H586M589 406.5H592M595 406.5H598M601 406.5H604M607 406.5H610M613 406.5H616M619 406.5H622M625 406.5H628M631 406.5H634M637 406.5H640M643 406.5H646M649 406.5H652M655 406.5H658M661 406.5H664M667 406.5H670M673 406.5H676M679 406.5H682M685 406.5H688M691 406.5H694M697 406.5H700M703 406.5H706M709 406.5H712M715 406.5H718M721 406.5H724M727 406.5H730M733 406.5H736M13 460.5H16M19 460.5H22M25 460.5H28M31 460.5H34M37 460.5H40M43 460.5H46M49 460.5H52M55 460.5H58M61 460.5H64M67 460.5H70M73 460.5H76M79 460.5H82M85 460.5H88M91 460.5H94M97 460.5H100M103 460.5H106M109 460.5H112M115 460.5H118M121 460.5H124M127 460.5H130M133 460.5H136M139 460.5H142M145 460.5H148M151 460.5H154M157 460.5H160M163 460.5H166M169 460.5H172M175 460.5H178M181 460.5H184M187 460.5H190M193 460.5H196M199 460.5H202M205 460.5H208M211 460.5H214M217 460.5H220M223 460.5H226M229 460.5H232M235 460.5H238M241 460.5H244M247 460.5H250M253 460.5H256M259 460.5H262M265 460.5H268M271 460.5H274M277 460.5H280M283 460.5H286M289 460.5H292M295 460.5H298M301 460.5H304M307 460.5H310M313 460.5H316M319 460.5H322M325 460.5H328M331 460.5H334M337 460.5H340M343 460.5H346M349 460.5H352M355 460.5H358M361 460.5H364M367 460.5H370M373 460.5H376M379 460.5H382M385 460.5H388M391 460.5H394M397 460.5H400M403 460.5H406M409 460.5H412M415 460.5H418M421 460.5H424M427 460.5H430M433 460.5H436M439 460.5H442M445 460.5H448M451 460.5H454M457 460.5H460M463 460.5H466M469 460.5H472M475 460.5H478M481 460.5H484M487 460.5H490M493 460.5H496M499 460.5H502M505 460.5H508M511 460.5H514M517 460.5H520M523 460.5H526M529 460.5H532M535 460.5H538M541 460.5H544M547 460.5H550M553 460.5H556M559 460.5H562M565 460.5H568M571 460.5H574M577 460.5H580M583 460.5H586M589 460.5H592M595 460.5H598M601 460.5H604M607 460.5H610M613 460.5H616M619 460.5H622M625 460.5H628M631 460.5H634M637 460.5H640M643 460.5H646M649 460.5H652M655 460.5H658M661 460.5H664M667 460.5H670M673 460.5H676M679 460.5H682M685 460.5H688M691 460.5H694M697 460.5H700M703 460.5H706M709 460.5H712M715 460.5H718M721 460.5H724M727 460.5H730M733 460.5H736M13 486.5H16M19 486.5H22M25 486.5H28M31 486.5H34M37 486.5H40M43 486.5H46M49 486.5H52M55 486.5H58M61 486.5H64M67 486.5H70M73 486.5H76M79 486.5H82M85 486.5H88M91 486.5H94M97 486.5H100M103 486.5H106M109 486.5H112M115 486.5H118M121 486.5H124M127 486.5H130M133 486.5H136M139 486.5H142M145 486.5H148M151 486.5H154M157 486.5H160M163 486.5H166M169 486.5H172M175 486.5H178M181 486.5H184M187 486.5H190M193 486.5H196M199 486.5H202M205 486.5H208M211 486.5H214M217 486.5H220M223 486.5H226M229 486.5H232M235 486.5H238M241 486.5H244M247 486.5H250M253 486.5H256M259 486.5H262M265 486.5H268M271 486.5H274M277 486.5H280M283 486.5H286M289 486.5H292M295 486.5H298M301 486.5H304M307 486.5H310M313 486.5H316M319 486.5H322M325 486.5H328M331 486.5H334M337 486.5H340M343 486.5H346M349 486.5H352M355 486.5H358M361 486.5H364M367 486.5H370M373 486.5H376M379 486.5H382M385 486.5H388M391 486.5H394M397 486.5H400M403 486.5H406M409 486.5H412M415 486.5H418M421 486.5H424M427 486.5H430M433 486.5H436M439 486.5H442M445 486.5H448M451 486.5H454M457 486.5H460M463 486.5H466M469 486.5H472M475 486.5H478M481 486.5H484M487 486.5H490M493 486.5H496M499 486.5H502M505 486.5H508M511 486.5H514M517 486.5H520M523 486.5H526M529 486.5H532M535 486.5H538M541 486.5H544M547 486.5H550M553 486.5H556M559 486.5H562M565 486.5H568M571 486.5H574M577 486.5H580M583 486.5H586M589 486.5H592M595 486.5H598M601 486.5H604M607 486.5H610M613 486.5H616M619 486.5H622M625 486.5H628M631 486.5H634M637 486.5H640M643 486.5H646M649 486.5H652M655 486.5H658M661 486.5H664M667 486.5H670M673 486.5H676M679 486.5H682M685 486.5H688M691 486.5H694M697 486.5H700M703 486.5H706M709 486.5H712M715 486.5H718M721 486.5H724M727 486.5H730M733 486.5H736M13 512.5H16M19 512.5H22M25 512.5H28M31 512.5H34M37 512.5H40M43 512.5H46M49 512.5H52M55 512.5H58M61 512.5H64M67 512.5H70M73 512.5H76M79 512.5H82M85 512.5H88M91 512.5H94M97 512.5H100M103 512.5H106M109 512.5H112M115 512.5H118M121 512.5H124M127 512.5H130M133 512.5H136M139 512.5H142M145 512.5H148M151 512.5H154M157 512.5H160M163 512.5H166M169 512.5H172M175 512.5H178M181 512.5H184M187 512.5H190M193 512.5H196M199 512.5H202M205 512.5H208M211 512.5H214M217 512.5H220M223 512.5H226M229 512.5H232M235 512.5H238M241 512.5H244M247 512.5H250M253 512.5H256M259 512.5H262M265 512.5H268M271 512.5H274M277 512.5H280M283 512.5H286M289 512.5H292M295 512.5H298M301 512.5H304M307 512.5H310M313 512.5H316M319 512.5H322M325 512.5H328M331 512.5H334M337 512.5H340M343 512.5H346M349 512.5H352M355 512.5H358M361 512.5H364M367 512.5H370M373 512.5H376M379 512.5H382M385 512.5H388M391 512.5H394M397 512.5H400M403 512.5H406M409 512.5H412M415 512.5H418M421 512.5H424M427 512.5H430M433 512.5H436M439 512.5H442M445 512.5H448M451 512.5H454M457 512.5H460M463 512.5H466M469 512.5H472M475 512.5H478M481 512.5H484M487 512.5H490M493 512.5H496M499 512.5H502M505 512.5H508M511 512.5H514M517 512.5H520M523 512.5H526M529 512.5H532M535 512.5H538M541 512.5H544M547 512.5H550M553 512.5H556M559 512.5H562M565 512.5H568M571 512.5H574M577 512.5H580M583 512.5H586M589 512.5H592M595 512.5H598M601 512.5H604M607 512.5H610M613 512.5H616M619 512.5H622M625 512.5H628M631 512.5H634M637 512.5H640M643 512.5H646M649 512.5H652M655 512.5H658M661 512.5H664M667 512.5H670M673 512.5H676M679 512.5H682M685 512.5H688M691 512.5H694M697 512.5H700M703 512.5H706M709 512.5H712M715 512.5H718M721 512.5H724M727 512.5H730M733 512.5H736" stroke="#c0c0c0" stroke-width="1" fill="none" shape-rendering="crispEdges" style="mix-blend-mode:difference"/>
<g fill="none" stroke="#fff" stroke-width="1" shape-rendering="crispEdges">
<rect x="11.5" y="34.5" width="728" height="254"/>
<rect x="11.5" y="290.5" width="728" height="128"/>
<rect x="11.5" y="420.5" width="728" height="132"/>
</g>
<path d="M740 54.5 h2M740 87.5 h2M740 120.5 h2M740 153.5 h2M740 186.5 h2M740 219.5 h2M740 252.5 h2M740 285.5 h2M740 292.5 h1M740 417.5 h1M740 422.5 h1M740 551.5 h1" stroke="#fff" stroke-width="1" shape-rendering="crispEdges"/>
<path d="M12.5 553v3M76.5 553v3M140.5 553v3M204.5 553v3M268.5 553v3M332.5 553v3M396.5 553v3M460.5 553v3M524.5 553v3M588.5 553v3M652.5 553v3M716.5 553v3" stroke="#fff" stroke-width="1" shape-rendering="crispEdges"/>
<polygon points="12,547 12,552 17,552" fill="#778899"/>
<polygon points="15,41 22,41 18.5,45" fill="#fff"/>
<text x="27.2" y="46" font-size="9.8" fill="#fff" stroke="#fff" stroke-width="0.1" letter-spacing="-0.33">USDJPY,H1</text>
<text x="84" y="46" font-size="9.8" fill="#fff" stroke="#fff" stroke-width="0.1" letter-spacing="-0.26">109.813</text>
<text x="120.8" y="46" font-size="9.8" fill="#fff" stroke="#fff" stroke-width="0.1" letter-spacing="-0.26">109.862</text>
<text x="156.2" y="46" font-size="9.8" fill="#fff" stroke="#fff" stroke-width="0.1" letter-spacing="-0.26">109.802</text>
<text x="192.3" y="46" font-size="9.8" fill="#fff" stroke="#fff" stroke-width="0.1" letter-spacing="-0.26">109.830</text>
<text x="15.5" y="303" font-size="9.8" fill="#fff" stroke="#fff" stroke-width="0.1" letter-spacing="-0.22">R(9,26,52) -74.6 -39.0 -14.4</text>
<text x="16" y="434" font-size="9.8" fill="#fff" stroke="#fff" stroke-width="0.1" letter-spacing="-0.3">RSI(14) 38.0747</text>
<text x="745" y="58" font-size="9.8" fill="#fff" stroke="#fff" stroke-width="0.1" letter-spacing="-0.3">110.155</text>
<text x="745" y="91" font-size="9.8" fill="#fff" stroke="#fff" stroke-width="0.1" letter-spacing="-0.3">109.945</text>
<text x="745" y="124" font-size="9.8" fill="#fff" stroke="#fff" stroke-width="0.1" letter-spacing="-0.3">109.735</text>
<text x="745" y="157" font-size="9.8" fill="#fff" stroke="#fff" stroke-width="0.1" letter-spacing="-0.3">109.530</text>
<text x="745" y="190" font-size="9.8" fill="#fff" stroke="#fff" stroke-width="0.1" letter-spacing="-0.3">109.320</text>
<text x="745" y="223" font-size="9.8" fill="#fff" stroke="#fff" stroke-width="0.1" letter-spacing="-0.3">109.110</text>
<text x="745" y="256" font-size="9.8" fill="#fff" stroke="#fff" stroke-width="0.1" letter-spacing="-0.3">108.905</text>
<text x="745" y="289" font-size="9.8" fill="#fff" stroke="#fff" stroke-width="0.1" letter-spacing="-0.3">108.695</text>
<rect x="741" y="100" width="41" height="11" fill="#fff"/>
<text x="745" y="109" font-size="9.8" fill="#000" stroke="#000" stroke-width="0.1" letter-spacing="-0.3">109.830</text>
<text x="743" y="300" font-size="9.8" fill="#fff" stroke="#fff" stroke-width="0.1" letter-spacing="-0.3">120</text>
<text x="743" y="307" font-size="9.8" fill="#fff" stroke="#fff" stroke-width="0.1" letter-spacing="-0.3">100</text>
<text x="743" y="318" font-size="9.8" fill="#fff" stroke="#fff" stroke-width="0.1" letter-spacing="-0.3">80</text>
<text x="743" y="336" font-size="9.8" fill="#fff" stroke="#fff" stroke-width="0.1" letter-spacing="-0.3">50</text>
<text x="743" y="364" font-size="9.8" fill="#fff" stroke="#fff" stroke-width="0.1" letter-spacing="-0.3">0.00</text>
<text x="743" y="393" font-size="9.8" fill="#fff" stroke="#fff" stroke-width="0.1" letter-spacing="-0.3">-50</text>
<text x="743" y="410" font-size="9.8" fill="#fff" stroke="#fff" stroke-width="0.1" letter-spacing="-0.3">-80</text>
<text x="743" y="415" font-size="9.8" fill="#fff" stroke="#fff" stroke-width="0.1" letter-spacing="-0.3">-100</text>
<text x="743" y="431" font-size="9.8" fill="#fff" stroke="#fff" stroke-width="0.1" letter-spacing="-0.3">100</text>
<text x="743" y="464" font-size="9.8" fill="#fff" stroke="#fff" stroke-width="0.1" letter-spacing="-0.3">70</text>
<text x="743" y="490" font-size="9.8" fill="#fff" stroke="#fff" stroke-width="0.1" letter-spacing="-0.3">50</text>
<text x="743" y="516" font-size="9.8" fill="#fff" stroke="#fff" stroke-width="0.1" letter-spacing="-0.3">30</text>
<text x="743" y="549" font-size="9.8" fill="#fff" stroke="#fff" stroke-width="0.1" letter-spacing="-0.3">0</text>
<text x="11" y="565" font-size="9.8" fill="#fff" stroke="#fff" stroke-width="0.1" letter-spacing="-0.17">26 May 2021</text>
<text x="75" y="565" font-size="9.8" fill="#fff" stroke="#fff" stroke-width="0.1" letter-spacing="-0.17">26 May 13:00</text>
<text x="139" y="565" font-size="9.8" fill="#fff" stroke="#fff" stroke-width="0.1" letter-spacing="-0.17">26 May 21:00</text>
<text x="203" y="565" font-size="9.8" fill="#fff" stroke="#fff" stroke-width="0.1" letter-spacing="-0.17">27 May 05:00</text>
<text x="267" y="565" font-size="9.8" fill="#fff" stroke="#fff" stroke-width="0.1" letter-spacing="-0.17">27 May 13:00</text>
<text x="331" y="565" font-size="9.8" fill="#fff" stroke="#fff" stroke-width="0.1" letter-spacing="-0.17">27 May 21:00</text>
<text x="395" y="565" font-size="9.8" fill="#fff" stroke="#fff" stroke-width="0.1" letter-spacing="-0.17">28 May 05:00</text>
<text x="459" y="565" font-size="9.8" fill="#fff" stroke="#fff" stroke-width="0.1" letter-spacing="-0.17">28 May 13:00</text>
<text x="523" y="565" font-size="9.8" fill="#fff" stroke="#fff" stroke-width="0.1" letter-spacing="-0.17">28 May 21:00</text>
<text x="587" y="565" font-size="9.8" fill="#fff" stroke="#fff" stroke-width="0.1" letter-spacing="-0.17">31 May 05:00</text>
<text x="651" y="565" font-size="9.8" fill="#fff" stroke="#fff" stroke-width="0.1" letter-spacing="-0.17">31 May 13:00</text>
<text x="715" y="565" font-size="9.8" fill="#fff" stroke="#fff" stroke-width="0.1" letter-spacing="-0.17">31 May 21:00</text>
</svg></body></html>
